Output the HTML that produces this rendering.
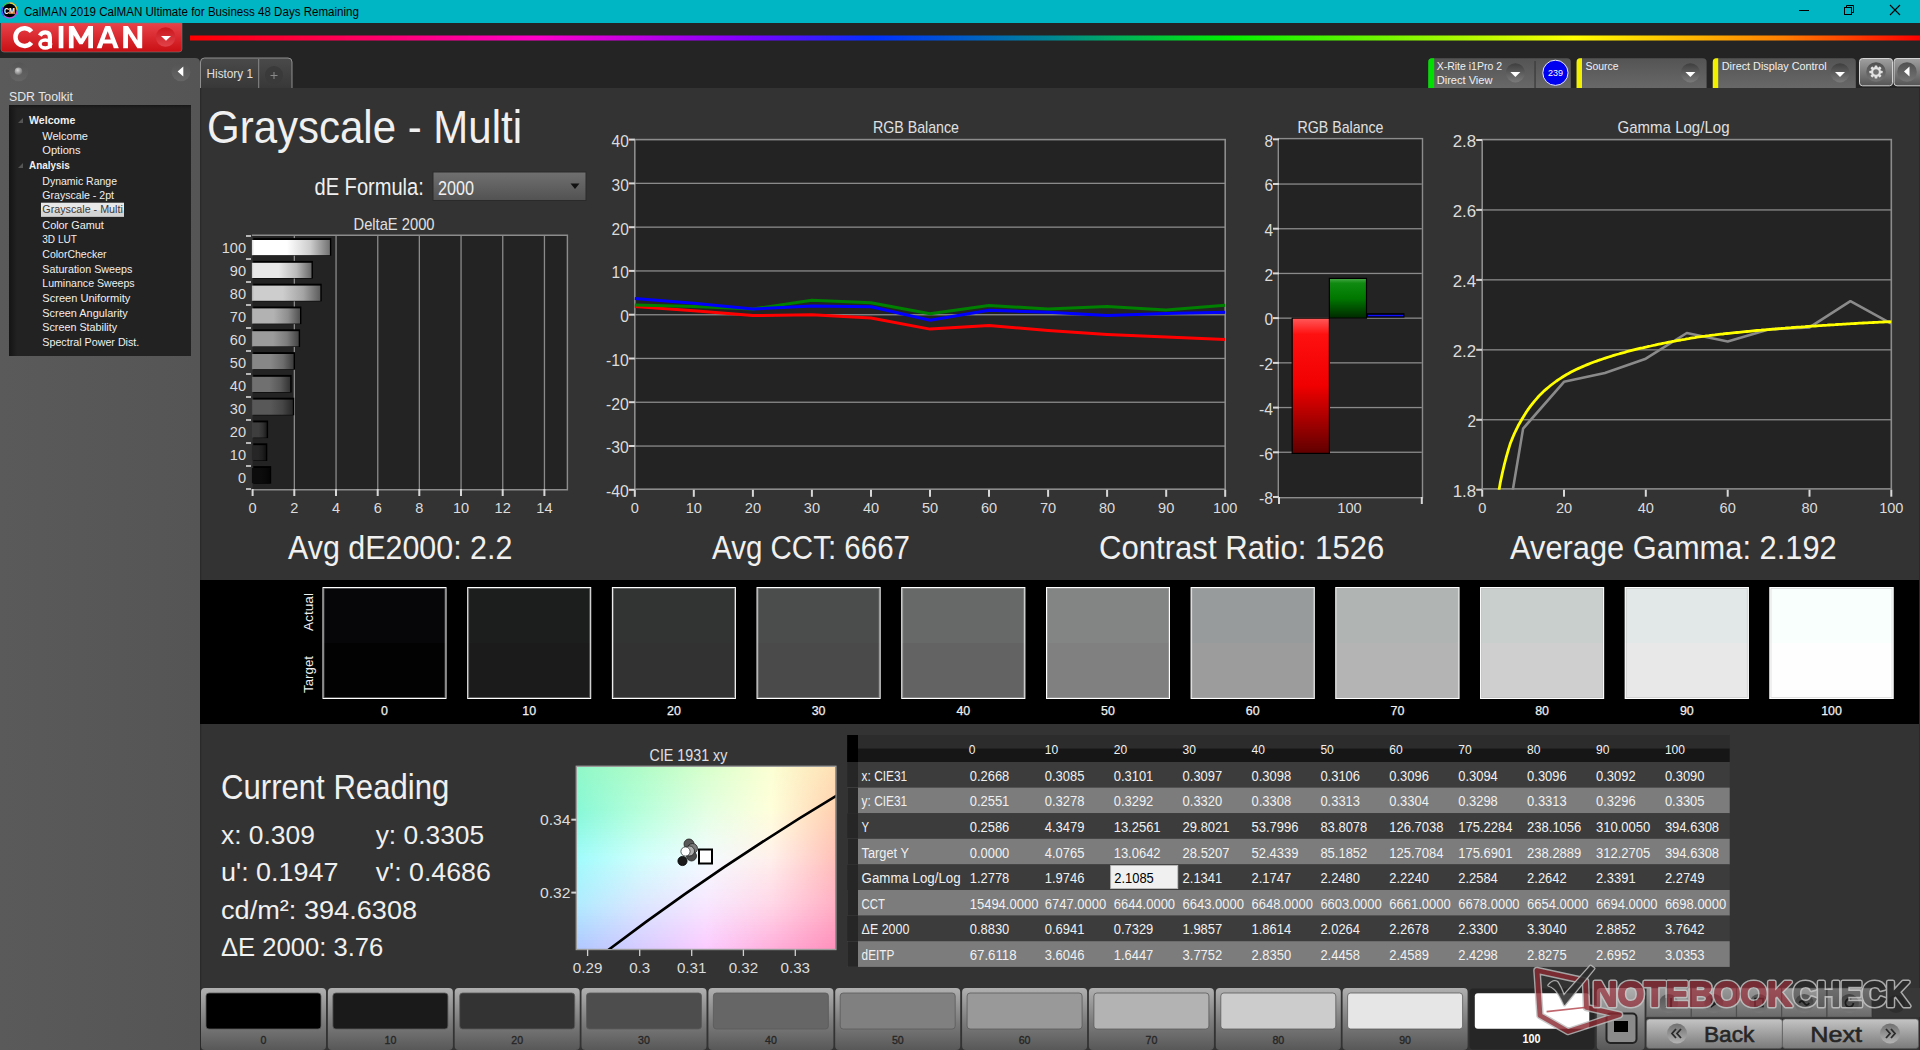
<!DOCTYPE html>
<html><head><meta charset="utf-8"><title>CalMAN</title>
<style>html,body{margin:0;padding:0;width:1920px;height:1050px;overflow:hidden;background:#333;}
svg text{font-family:"Liberation Sans",sans-serif;}</style></head>
<body>
<svg width="1920" height="1050" viewBox="0 0 1920 1050" style="position:absolute;left:0;top:0">
<defs>
<linearGradient id="rainbow" x1="190" x2="1920" y1="0" y2="0" gradientUnits="userSpaceOnUse">
<stop offset="0" stop-color="#ff0000"/><stop offset="0.2" stop-color="#ff00c8"/><stop offset="0.32" stop-color="#8000ff"/>
<stop offset="0.395" stop-color="#0030ff"/><stop offset="0.50" stop-color="#008890"/><stop offset="0.545" stop-color="#00b850"/><stop offset="0.60" stop-color="#00f000"/>
<stop offset="0.80" stop-color="#ffff00"/><stop offset="0.92" stop-color="#ff8000"/><stop offset="1" stop-color="#ff0000"/>
</linearGradient>
<linearGradient id="redbtn" x1="0" x2="0" y1="0" y2="1">
<stop offset="0" stop-color="#e8434a"/><stop offset="1" stop-color="#c90f14"/></linearGradient>
<linearGradient id="redcirc" x1="0" x2="0" y1="0" y2="1">
<stop offset="0" stop-color="#c8161c"/><stop offset="1" stop-color="#e2434a"/></linearGradient>
<linearGradient id="circ" x1="0" x2="0" y1="0" y2="1">
<stop offset="0" stop-color="#3e3e3e"/><stop offset="1" stop-color="#7a7a7a"/></linearGradient>
<linearGradient id="circ3" x1="0" x2="0" y1="0" y2="1">
<stop offset="0" stop-color="#707070"/><stop offset="1" stop-color="#b4b4b4"/></linearGradient>
<linearGradient id="circ2" x1="0" x2="0" y1="0" y2="1">
<stop offset="0" stop-color="#525252"/><stop offset="1" stop-color="#6c6c6c"/></linearGradient>
<linearGradient id="box" x1="0" x2="0" y1="0" y2="1">
<stop offset="0" stop-color="#545454"/><stop offset="1" stop-color="#686868"/></linearGradient>
<linearGradient id="gearbtn" x1="0" x2="0" y1="0" y2="1">
<stop offset="0" stop-color="#a0a0a0"/><stop offset="1" stop-color="#555555"/></linearGradient>
<linearGradient id="tab" x1="0" x2="0" y1="0" y2="1">
<stop offset="0" stop-color="#4a4a4a"/><stop offset="1" stop-color="#383838"/></linearGradient>
<linearGradient id="dd" x1="0" x2="0" y1="0" y2="1">
<stop offset="0" stop-color="#707070"/><stop offset="1" stop-color="#525252"/></linearGradient>
<linearGradient id="treeshadow" x1="0" x2="1" y1="0" y2="0">
<stop offset="0" stop-color="#141414"/><stop offset="1" stop-color="#222222"/></linearGradient>
<linearGradient id="treeshadowtop" x1="0" x2="0" y1="0" y2="1">
<stop offset="0" stop-color="#161616"/><stop offset="1" stop-color="#222222" stop-opacity="0"/></linearGradient>
<linearGradient id="sidebar" x1="0" x2="1" y1="0" y2="0">
<stop offset="0" stop-color="#5a5a5a"/><stop offset="1" stop-color="#555555"/></linearGradient>
<linearGradient id="btn" x1="0" x2="0" y1="0" y2="1">
<stop offset="0" stop-color="#b0b0b0"/><stop offset="0.55" stop-color="#7c7c7c"/><stop offset="1" stop-color="#585858"/></linearGradient>
<linearGradient id="btnsel" x1="0" x2="0" y1="0" y2="1">
<stop offset="0" stop-color="#1c1c1c"/><stop offset="1" stop-color="#303030"/></linearGradient>
<linearGradient id="nav" x1="0" x2="0" y1="0" y2="1">
<stop offset="0" stop-color="#c4c4c4"/><stop offset="1" stop-color="#7a7a7a"/></linearGradient>
<linearGradient id="navtop" x1="0" x2="0" y1="0" y2="1">
<stop offset="0" stop-color="#9a9a9a"/><stop offset="1" stop-color="#6a6a6a"/></linearGradient>
<linearGradient id="hdr" x1="0" x2="0" y1="0" y2="1">
<stop offset="0" stop-color="#2a2a2a"/><stop offset="0.45" stop-color="#1a1a1a"/><stop offset="1" stop-color="#0a0a0a"/></linearGradient>
<linearGradient id="redbar" x1="0" x2="0" y1="0" y2="1">
<stop offset="0" stop-color="#ff5a5a"/><stop offset="0.12" stop-color="#ff1010"/><stop offset="0.5" stop-color="#f00000"/><stop offset="1" stop-color="#600000"/></linearGradient>
<linearGradient id="greenbar" x1="0" x2="0" y1="0" y2="1">
<stop offset="0" stop-color="#48a848"/><stop offset="0.12" stop-color="#108a10"/><stop offset="0.5" stop-color="#007800"/><stop offset="1" stop-color="#002800"/></linearGradient>
<linearGradient id="bluebar" x1="0" x2="0" y1="0" y2="1">
<stop offset="0" stop-color="#3030ff"/><stop offset="1" stop-color="#000080"/></linearGradient>
<radialGradient id="ball" cx="0.4" cy="0.35" r="0.7">
<stop offset="0" stop-color="#d8d8d8"/><stop offset="1" stop-color="#6a6a6a"/></radialGradient>
<radialGradient id="cmring" cx="0.5" cy="0.5" r="0.5">
<stop offset="0.72" stop-color="#000"/><stop offset="1" stop-color="#000"/></radialGradient>
<linearGradient id="cieH" x1="0" x2="1" y1="0" y2="0">
<stop offset="0" stop-color="#9af0d0"/><stop offset="0.45" stop-color="#e8fff0"/><stop offset="1" stop-color="#ffd8a8"/></linearGradient>
<linearGradient id="cieB" x1="0" x2="1" y1="0" y2="0">
<stop offset="0" stop-color="#a8c4ff"/><stop offset="0.5" stop-color="#f8d8ff"/><stop offset="1" stop-color="#ff8cb4"/></linearGradient>
<linearGradient id="cieV" x1="0" x2="0" y1="0" y2="1">
<stop offset="0" stop-color="#fff" stop-opacity="0"/><stop offset="1" stop-color="#fff" stop-opacity="1"/></linearGradient>
<radialGradient id="cieW" cx="0.38" cy="0.45" r="0.45">
<stop offset="0" stop-color="#ffffff" stop-opacity="1"/><stop offset="1" stop-color="#ffffff" stop-opacity="0"/></radialGradient>

<linearGradient id="db100" x1="0" x2="1" y1="0" y2="0"><stop offset="0" stop-color="rgb(216,216,216)"/><stop offset="0.03" stop-color="rgb(255,255,255)"/><stop offset="0.45" stop-color="rgb(255,255,255)"/><stop offset="0.75" stop-color="rgb(204,204,204)"/><stop offset="1" stop-color="rgb(114,114,114)"/></linearGradient>
<linearGradient id="db90" x1="0" x2="1" y1="0" y2="0"><stop offset="0" stop-color="rgb(197,197,197)"/><stop offset="0.03" stop-color="rgb(232,232,232)"/><stop offset="0.45" stop-color="rgb(232,232,232)"/><stop offset="0.75" stop-color="rgb(185,185,185)"/><stop offset="1" stop-color="rgb(104,104,104)"/></linearGradient>
<linearGradient id="db80" x1="0" x2="1" y1="0" y2="0"><stop offset="0" stop-color="rgb(174,174,174)"/><stop offset="0.03" stop-color="rgb(205,205,205)"/><stop offset="0.45" stop-color="rgb(205,205,205)"/><stop offset="0.75" stop-color="rgb(164,164,164)"/><stop offset="1" stop-color="rgb(92,92,92)"/></linearGradient>
<linearGradient id="db70" x1="0" x2="1" y1="0" y2="0"><stop offset="0" stop-color="rgb(151,151,151)"/><stop offset="0.03" stop-color="rgb(178,178,178)"/><stop offset="0.45" stop-color="rgb(178,178,178)"/><stop offset="0.75" stop-color="rgb(142,142,142)"/><stop offset="1" stop-color="rgb(80,80,80)"/></linearGradient>
<linearGradient id="db60" x1="0" x2="1" y1="0" y2="0"><stop offset="0" stop-color="rgb(131,131,131)"/><stop offset="0.03" stop-color="rgb(155,155,155)"/><stop offset="0.45" stop-color="rgb(155,155,155)"/><stop offset="0.75" stop-color="rgb(124,124,124)"/><stop offset="1" stop-color="rgb(69,69,69)"/></linearGradient>
<linearGradient id="db50" x1="0" x2="1" y1="0" y2="0"><stop offset="0" stop-color="rgb(114,114,114)"/><stop offset="0.03" stop-color="rgb(135,135,135)"/><stop offset="0.45" stop-color="rgb(135,135,135)"/><stop offset="0.75" stop-color="rgb(108,108,108)"/><stop offset="1" stop-color="rgb(60,60,60)"/></linearGradient>
<linearGradient id="db40" x1="0" x2="1" y1="0" y2="0"><stop offset="0" stop-color="rgb(95,95,95)"/><stop offset="0.03" stop-color="rgb(112,112,112)"/><stop offset="0.45" stop-color="rgb(112,112,112)"/><stop offset="0.75" stop-color="rgb(89,89,89)"/><stop offset="1" stop-color="rgb(50,50,50)"/></linearGradient>
<linearGradient id="db30" x1="0" x2="1" y1="0" y2="0"><stop offset="0" stop-color="rgb(74,74,74)"/><stop offset="0.03" stop-color="rgb(88,88,88)"/><stop offset="0.45" stop-color="rgb(88,88,88)"/><stop offset="0.75" stop-color="rgb(70,70,70)"/><stop offset="1" stop-color="rgb(39,39,39)"/></linearGradient>
<linearGradient id="db20" x1="0" x2="1" y1="0" y2="0"><stop offset="0" stop-color="rgb(52,52,52)"/><stop offset="0.03" stop-color="rgb(62,62,62)"/><stop offset="0.45" stop-color="rgb(62,62,62)"/><stop offset="0.75" stop-color="rgb(49,49,49)"/><stop offset="1" stop-color="rgb(27,27,27)"/></linearGradient>
<linearGradient id="db10" x1="0" x2="1" y1="0" y2="0"><stop offset="0" stop-color="rgb(32,32,32)"/><stop offset="0.03" stop-color="rgb(38,38,38)"/><stop offset="0.45" stop-color="rgb(38,38,38)"/><stop offset="0.75" stop-color="rgb(30,30,30)"/><stop offset="1" stop-color="rgb(17,17,17)"/></linearGradient>
<linearGradient id="db0" x1="0" x2="1" y1="0" y2="0"><stop offset="0" stop-color="rgb(10,10,10)"/><stop offset="0.03" stop-color="rgb(12,12,12)"/><stop offset="0.45" stop-color="rgb(12,12,12)"/><stop offset="0.75" stop-color="rgb(9,9,9)"/><stop offset="1" stop-color="rgb(5,5,5)"/></linearGradient>
</defs>
<g font-family="Liberation Sans, sans-serif">
<rect x="0" y="0" width="1920" height="1050" fill="#333333"/>
<rect x="0" y="0" width="1920" height="23" fill="#00b5c4"/>
<circle cx="9.5" cy="10.5" r="7.6" fill="none" stroke="#e040e0" stroke-width="1.2"/>
<path d="M9.5 2.9 A7.6 7.6 0 0 1 17.1 10.5" fill="none" stroke="#e0e020" stroke-width="1.2"/>
<path d="M2.9 7 A7.6 7.6 0 0 1 9.5 2.9" fill="none" stroke="#20d040" stroke-width="1.2"/>
<path d="M4 16 A7.6 7.6 0 0 1 2.9 7" fill="none" stroke="#2060ff" stroke-width="1.2"/>
<circle cx="9.5" cy="10.5" r="6.8" fill="#000"/>
<text x="4.0" y="14.2" font-size="8.50" fill="#fff" textLength="11.0" lengthAdjust="spacingAndGlyphs" font-weight="bold" >CM</text>
<text x="24.0" y="15.6" font-size="12.50" fill="#000" textLength="335.0" lengthAdjust="spacingAndGlyphs" >CalMAN 2019 CalMAN Ultimate for Business 48 Days Remaining</text>
<rect x="1799" y="10" width="10" height="1" fill="#000"/>
<rect x="1844.5" y="7.5" width="7" height="7" fill="none" stroke="#000" stroke-width="1"/>
<path d="M1846.5 7.5 V5.5 H1853.5 V12.5 H1851.5" fill="none" stroke="#000" stroke-width="1"/>
<path d="M1890 5 L1900 15 M1900 5 L1890 15" stroke="#000" stroke-width="1.1"/>
<rect x="0" y="23" width="1920" height="65" fill="#242424"/>
<rect x="190" y="35.5" width="1730" height="5" fill="url(#rainbow)"/>
<path d="M1 23 H182 V49 Q182 52 179 52 H4 Q1 52 1 49 Z" fill="url(#redbtn)" stroke="#7a7a7a" stroke-width="0.6"/>
<g fill="#fff">
<path d="M31.45 31.59 A8.95 8.95 0 1 0 31.45 42.61" fill="none" stroke="#fff" stroke-width="4.5"/>
<path d="M39.8 35.6 Q41.6 32.4 45.4 32.4 Q49.9 32.4 49.9 37.6 V48.25" fill="none" stroke="#fff" stroke-width="4.2"/>
<ellipse cx="45.3" cy="44.1" rx="5.3" ry="4.0" fill="none" stroke="#fff" stroke-width="3.5"/>
<rect x="58.7" y="26" width="4.7" height="22.25"/>
<path d="M68.9 48.25 V26 H73.8 L81 38.8 L88.2 26 H93 V48.25 H88.3 V35 L82.6 44.3 H79.4 L73.6 35 V48.25 Z"/>
<path fill-rule="evenodd" d="M96.6 48.25 L105.3 26 H110.2 L118.8 48.25 H113.8 L112.2 43.4 H103.2 L101.6 48.25 Z M104.6 39.5 H110.8 L107.7 31.2 Z"/>
<path d="M123.2 48.25 V26 H128 L137.4 40.6 V26 H142.2 V48.25 H137.4 L128 33.6 V48.25 Z"/>
</g>
<circle cx="165.6" cy="37" r="9.8" fill="url(#redcirc)"/>
<path d="M161 36 H171 L166 40.8 Z" fill="#fff"/>
<path d="M0 58 H195 Q200 58 200 63 V1050 H0 Z" fill="url(#sidebar)"/>
<circle cx="18.75" cy="71.7" r="9.5" fill="url(#circ2)" opacity="0.6"/>
<circle cx="18.5" cy="71.3" r="3.8" fill="url(#ball)"/>
<circle cx="181" cy="71.7" r="9.5" fill="url(#circ2)" opacity="0.7"/>
<path d="M177.6 71.4 L183.3 66.5 V76.4 Z" fill="#fff"/>
<text x="9.0" y="100.8" font-size="13.08" fill="#e6e6e6" textLength="64.0" lengthAdjust="spacingAndGlyphs" >SDR Toolkit</text>
<rect x="9" y="105" width="182" height="251" fill="#222"/>
<rect x="9" y="105" width="8" height="251" fill="url(#treeshadow)"/>
<rect x="9" y="105" width="182" height="5" fill="url(#treeshadowtop)"/>
<text x="29.0" y="123.9" font-size="11.63" fill="#f0f0f0" textLength="46.3" lengthAdjust="spacingAndGlyphs" font-weight="bold" >Welcome</text>
<path d="M18 122.9 L23 122.9 L23 117.9 Z" fill="#555"/>
<text x="42.3" y="139.9" font-size="11.63" fill="#f0f0f0" textLength="45.7" lengthAdjust="spacingAndGlyphs" >Welcome</text>
<text x="42.3" y="153.7" font-size="11.63" fill="#f0f0f0" textLength="38.3" lengthAdjust="spacingAndGlyphs" >Options</text>
<text x="29.0" y="168.9" font-size="11.63" fill="#f0f0f0" textLength="40.7" lengthAdjust="spacingAndGlyphs" font-weight="bold" >Analysis</text>
<path d="M18 167.9 L23 167.9 L23 162.9 Z" fill="#555"/>
<text x="42.3" y="184.9" font-size="11.63" fill="#f0f0f0" textLength="74.7" lengthAdjust="spacingAndGlyphs" >Dynamic Range</text>
<text x="42.3" y="198.6" font-size="11.63" fill="#f0f0f0" textLength="71.7" lengthAdjust="spacingAndGlyphs" >Grayscale - 2pt</text>
<rect x="41" y="202.7" width="83" height="13.9" fill="#e8e8e8"/>
<rect x="41" y="210.4" width="83" height="6.2" fill="#d4d4d4"/>
<text x="42.3" y="213.4" font-size="11.63" fill="#3a3a3a" textLength="80.5" lengthAdjust="spacingAndGlyphs" >Grayscale - Multi</text>
<text x="42.3" y="228.6" font-size="11.63" fill="#f0f0f0" textLength="61.5" lengthAdjust="spacingAndGlyphs" >Color Gamut</text>
<text x="42.3" y="242.9" font-size="11.63" fill="#f0f0f0" textLength="34.5" lengthAdjust="spacingAndGlyphs" >3D LUT</text>
<text x="42.3" y="257.7" font-size="11.63" fill="#f0f0f0" textLength="64.2" lengthAdjust="spacingAndGlyphs" >ColorChecker</text>
<text x="42.3" y="272.8" font-size="11.63" fill="#f0f0f0" textLength="90.0" lengthAdjust="spacingAndGlyphs" >Saturation Sweeps</text>
<text x="42.3" y="287.0" font-size="11.63" fill="#f0f0f0" textLength="92.3" lengthAdjust="spacingAndGlyphs" >Luminance Sweeps</text>
<text x="42.3" y="301.9" font-size="11.63" fill="#f0f0f0" textLength="88.0" lengthAdjust="spacingAndGlyphs" >Screen Uniformity</text>
<text x="42.3" y="316.8" font-size="11.63" fill="#f0f0f0" textLength="85.5" lengthAdjust="spacingAndGlyphs" >Screen Angularity</text>
<text x="42.3" y="331.0" font-size="11.63" fill="#f0f0f0" textLength="74.8" lengthAdjust="spacingAndGlyphs" >Screen Stability</text>
<text x="42.3" y="345.8" font-size="11.63" fill="#f0f0f0" textLength="97.0" lengthAdjust="spacingAndGlyphs" >Spectral Power Dist.</text>
<path d="M200.5 88 V62 Q200.5 58 204.5 58 H288 Q292 58 292 62 V88" fill="url(#tab)" stroke="#9a9a9a" stroke-width="0.9"/>
<rect x="258.2" y="59" width="1" height="29" fill="#8a8a8a"/>
<text x="206.5" y="78.0" font-size="11.92" fill="#e0e0e0" textLength="46.5" lengthAdjust="spacingAndGlyphs" >History 1</text>
<circle cx="274" cy="75" r="9" fill="#3a3a3a"/>
<path d="M270.5 75.5 H277.5 M274 72 V79" stroke="#8a8a8a" stroke-width="1"/>
<rect x="200" y="88" width="1719" height="962" fill="#333333"/>
<rect x="1919" y="88" width="1" height="962" fill="#2a2a2a"/>
<rect x="200" y="88" width="1.2" height="962" fill="#2a2a2a"/>
<path d="M1428.3 88 V62 Q1428.3 58.3 1432 58.3 H1567 Q1570.8 58.3 1570.8 62 V88 Z" fill="url(#box)"/>
<path d="M1428.3 88 V62 Q1428.3 58.3 1432 58.3 H1434.2 V88 Z" fill="#00e000"/>
<text x="1436.7" y="69.9" font-size="11.05" fill="#f0f0f0" textLength="65.3" lengthAdjust="spacingAndGlyphs" >X-Rite i1Pro 2</text>
<text x="1436.7" y="83.7" font-size="11.05" fill="#f0f0f0" textLength="55.8" lengthAdjust="spacingAndGlyphs" >Direct View</text>
<circle cx="1515.4" cy="72.8" r="9.6" fill="url(#circ)"/>
<path d="M1510.4 72.0 H1520.4 L1515.4 77.0 Z" fill="#fff"/>
<rect x="1534.3" y="61" width="1.5" height="27" fill="#404040"/>
<circle cx="1555.4" cy="72.8" r="12.6" fill="#0000f0" stroke="#e8e8ff" stroke-width="1"/>
<text x="1547.9" y="75.8" font-size="8.72" fill="#fff" textLength="15.0" lengthAdjust="spacingAndGlyphs" >239</text>
<path d="M1576.6 88 V62 Q1576.6 58.3 1580.3 58.3 H1702.8 Q1706.6 58.3 1706.6 62 V88 Z" fill="url(#box)"/>
<path d="M1576.6 88 V62 Q1576.6 58.3 1580.3 58.3 H1582.0 V88 Z" fill="#f0f000"/>
<text x="1585.6" y="69.9" font-size="11.05" fill="#f0f0f0" textLength="33.0" lengthAdjust="spacingAndGlyphs" >Source</text>
<circle cx="1690.4" cy="72.8" r="9.6" fill="url(#circ)"/>
<path d="M1685.4 72.0 H1695.4 L1690.4 77.0 Z" fill="#fff"/>
<path d="M1712.8 88 V62 Q1712.8 58.3 1716.5 58.3 H1852.0 Q1855.8 58.3 1855.8 62 V88 Z" fill="url(#box)"/>
<path d="M1712.8 88 V62 Q1712.8 58.3 1716.5 58.3 H1718.2 V88 Z" fill="#f0f000"/>
<text x="1721.8" y="69.9" font-size="11.05" fill="#f0f0f0" textLength="104.8" lengthAdjust="spacingAndGlyphs" >Direct Display Control</text>
<circle cx="1840" cy="72.8" r="9.6" fill="url(#circ)"/>
<path d="M1835 72.0 H1845 L1840 77.0 Z" fill="#fff"/>
<rect x="1859.5" y="58.5" width="33" height="27.3" rx="3" fill="url(#gearbtn)" stroke="#e0e0e0" stroke-width="0.9"/>
<circle cx="1876" cy="72" r="9.8" fill="url(#circ)" opacity="0.8"/>
<g transform="translate(1876,72)" fill="#e2e2e2"><circle r="4.9"/><rect x="-1.35" y="-6.6" width="2.7" height="3" rx="0.6" transform="rotate(0)"/><rect x="-1.35" y="-6.6" width="2.7" height="3" rx="0.6" transform="rotate(45)"/><rect x="-1.35" y="-6.6" width="2.7" height="3" rx="0.6" transform="rotate(90)"/><rect x="-1.35" y="-6.6" width="2.7" height="3" rx="0.6" transform="rotate(135)"/><rect x="-1.35" y="-6.6" width="2.7" height="3" rx="0.6" transform="rotate(180)"/><rect x="-1.35" y="-6.6" width="2.7" height="3" rx="0.6" transform="rotate(225)"/><rect x="-1.35" y="-6.6" width="2.7" height="3" rx="0.6" transform="rotate(270)"/><rect x="-1.35" y="-6.6" width="2.7" height="3" rx="0.6" transform="rotate(315)"/></g>
<circle cx="1876" cy="72" r="2.8" fill="#727272"/>
<rect x="1894" y="58.5" width="30" height="27.3" rx="3" fill="url(#gearbtn)" stroke="#e0e0e0" stroke-width="0.9"/>
<circle cx="1907" cy="72" r="9.8" fill="url(#circ)" opacity="0.8"/>
<path d="M1904 71.5 L1909.5 66.5 V76.5 Z" fill="#fff"/>
<text x="207.0" y="143.2" font-size="45.49" fill="#f0f0f0" textLength="315.0" lengthAdjust="spacingAndGlyphs" >Grayscale - Multi</text>
<text x="314.5" y="195.0" font-size="23.69" fill="#f0f0f0" textLength="109.3" lengthAdjust="spacingAndGlyphs" >dE Formula:</text>
<rect x="433" y="172" width="153" height="28.5" fill="url(#dd)" stroke="#2a2a2a" stroke-width="1"/>
<text x="438.0" y="195.0" font-size="20.06" fill="#f0f0f0" textLength="36.0" lengthAdjust="spacingAndGlyphs" >2000</text>
<path d="M570.5 183.5 H579.5 L575 189 Z" fill="#111"/>
<text x="353.5" y="230.2" font-size="15.70" fill="#e0e0e0" textLength="81.0" lengthAdjust="spacingAndGlyphs" >DeltaE 2000</text>
<rect x="252.6" y="236.0" width="314.1" height="253.0" fill="#232323"/>
<rect x="293.7" y="236.0" width="1.3" height="253.0" fill="#8a8a8a"/>
<rect x="335.4" y="236.0" width="1.3" height="253.0" fill="#8a8a8a"/>
<rect x="377.1" y="236.0" width="1.3" height="253.0" fill="#8a8a8a"/>
<rect x="418.7" y="236.0" width="1.3" height="253.0" fill="#8a8a8a"/>
<rect x="460.4" y="236.0" width="1.3" height="253.0" fill="#8a8a8a"/>
<rect x="502.1" y="236.0" width="1.3" height="253.0" fill="#8a8a8a"/>
<rect x="543.8" y="236.0" width="1.3" height="253.0" fill="#8a8a8a"/>
<path d="M251.9 235.3 H567.4000000000001 V489.7 H251.9" fill="none" stroke="#8c8c8c" stroke-width="1.4"/>
<rect x="253.3" y="238.1" width="78.0" height="17.6" fill="#000"/>
<rect x="251.9" y="240.0" width="78.0" height="15.2" fill="url(#db100)"/>
<rect x="246" y="235.2" width="5" height="1.6" fill="#d8d8d8"/>
<text x="246.0" y="253.3" font-size="14.53" fill="#dcdcdc" textLength="24.3" lengthAdjust="spacingAndGlyphs" text-anchor="end" >100</text>
<rect x="253.3" y="260.9" width="59.6" height="17.6" fill="#000"/>
<rect x="251.9" y="262.8" width="59.6" height="15.2" fill="url(#db90)"/>
<rect x="246" y="258.2" width="5" height="1.6" fill="#d8d8d8"/>
<text x="246.0" y="276.3" font-size="14.53" fill="#dcdcdc" textLength="16.2" lengthAdjust="spacingAndGlyphs" text-anchor="end" >90</text>
<rect x="253.3" y="283.7" width="68.4" height="17.6" fill="#000"/>
<rect x="251.9" y="285.6" width="68.4" height="15.2" fill="url(#db80)"/>
<rect x="246" y="281.2" width="5" height="1.6" fill="#d8d8d8"/>
<text x="246.0" y="299.3" font-size="14.53" fill="#dcdcdc" textLength="16.2" lengthAdjust="spacingAndGlyphs" text-anchor="end" >80</text>
<rect x="253.3" y="306.5" width="48.1" height="17.6" fill="#000"/>
<rect x="251.9" y="308.4" width="48.1" height="15.2" fill="url(#db70)"/>
<rect x="246" y="304.2" width="5" height="1.6" fill="#d8d8d8"/>
<text x="246.0" y="322.3" font-size="14.53" fill="#dcdcdc" textLength="16.2" lengthAdjust="spacingAndGlyphs" text-anchor="end" >70</text>
<rect x="253.3" y="329.3" width="46.8" height="17.6" fill="#000"/>
<rect x="251.9" y="331.2" width="46.8" height="15.2" fill="url(#db60)"/>
<rect x="246" y="327.2" width="5" height="1.6" fill="#d8d8d8"/>
<text x="246.0" y="345.3" font-size="14.53" fill="#dcdcdc" textLength="16.2" lengthAdjust="spacingAndGlyphs" text-anchor="end" >60</text>
<rect x="253.3" y="352.1" width="41.7" height="17.6" fill="#000"/>
<rect x="251.9" y="354.0" width="41.7" height="15.2" fill="url(#db50)"/>
<rect x="246" y="350.2" width="5" height="1.6" fill="#d8d8d8"/>
<text x="246.0" y="368.3" font-size="14.53" fill="#dcdcdc" textLength="16.2" lengthAdjust="spacingAndGlyphs" text-anchor="end" >50</text>
<rect x="253.3" y="374.9" width="38.3" height="17.6" fill="#000"/>
<rect x="251.9" y="376.8" width="38.3" height="15.2" fill="url(#db40)"/>
<rect x="246" y="373.2" width="5" height="1.6" fill="#d8d8d8"/>
<text x="246.0" y="391.3" font-size="14.53" fill="#dcdcdc" textLength="16.2" lengthAdjust="spacingAndGlyphs" text-anchor="end" >40</text>
<rect x="253.3" y="397.7" width="40.9" height="17.6" fill="#000"/>
<rect x="251.9" y="399.6" width="40.9" height="15.2" fill="url(#db30)"/>
<rect x="246" y="396.2" width="5" height="1.6" fill="#d8d8d8"/>
<text x="246.0" y="414.3" font-size="14.53" fill="#dcdcdc" textLength="16.2" lengthAdjust="spacingAndGlyphs" text-anchor="end" >30</text>
<rect x="253.3" y="420.5" width="14.8" height="17.6" fill="#000"/>
<rect x="251.9" y="422.4" width="14.8" height="15.2" fill="url(#db20)"/>
<rect x="246" y="419.2" width="5" height="1.6" fill="#d8d8d8"/>
<text x="246.0" y="437.3" font-size="14.53" fill="#dcdcdc" textLength="16.2" lengthAdjust="spacingAndGlyphs" text-anchor="end" >20</text>
<rect x="253.3" y="443.3" width="14.0" height="17.6" fill="#000"/>
<rect x="251.9" y="445.2" width="14.0" height="15.2" fill="url(#db10)"/>
<rect x="246" y="442.2" width="5" height="1.6" fill="#d8d8d8"/>
<text x="246.0" y="460.3" font-size="14.53" fill="#dcdcdc" textLength="16.2" lengthAdjust="spacingAndGlyphs" text-anchor="end" >10</text>
<rect x="253.3" y="466.1" width="17.9" height="17.6" fill="#000"/>
<rect x="251.9" y="468.0" width="17.9" height="15.2" fill="url(#db0)"/>
<rect x="246" y="465.2" width="5" height="1.6" fill="#d8d8d8"/>
<text x="246.0" y="483.3" font-size="14.53" fill="#dcdcdc" textLength="8.1" lengthAdjust="spacingAndGlyphs" text-anchor="end" >0</text>
<rect x="246" y="488.2" width="5" height="1.6" fill="#d8d8d8"/>
<rect x="251.6" y="489.0" width="2" height="7" fill="#d8d8d8"/>
<text x="252.6" y="512.5" font-size="15.41" fill="#dcdcdc" textLength="8.1" lengthAdjust="spacingAndGlyphs" text-anchor="middle" >0</text>
<rect x="293.3" y="489.0" width="2" height="7" fill="#d8d8d8"/>
<text x="294.3" y="512.5" font-size="15.41" fill="#dcdcdc" textLength="8.1" lengthAdjust="spacingAndGlyphs" text-anchor="middle" >2</text>
<rect x="335.0" y="489.0" width="2" height="7" fill="#d8d8d8"/>
<text x="336.0" y="512.5" font-size="15.41" fill="#dcdcdc" textLength="8.1" lengthAdjust="spacingAndGlyphs" text-anchor="middle" >4</text>
<rect x="376.7" y="489.0" width="2" height="7" fill="#d8d8d8"/>
<text x="377.7" y="512.5" font-size="15.41" fill="#dcdcdc" textLength="8.1" lengthAdjust="spacingAndGlyphs" text-anchor="middle" >6</text>
<rect x="418.3" y="489.0" width="2" height="7" fill="#d8d8d8"/>
<text x="419.3" y="512.5" font-size="15.41" fill="#dcdcdc" textLength="8.1" lengthAdjust="spacingAndGlyphs" text-anchor="middle" >8</text>
<rect x="460.0" y="489.0" width="2" height="7" fill="#d8d8d8"/>
<text x="461.0" y="512.5" font-size="15.41" fill="#dcdcdc" textLength="16.2" lengthAdjust="spacingAndGlyphs" text-anchor="middle" >10</text>
<rect x="501.7" y="489.0" width="2" height="7" fill="#d8d8d8"/>
<text x="502.7" y="512.5" font-size="15.41" fill="#dcdcdc" textLength="16.2" lengthAdjust="spacingAndGlyphs" text-anchor="middle" >12</text>
<rect x="543.4" y="489.0" width="2" height="7" fill="#d8d8d8"/>
<text x="544.4" y="512.5" font-size="15.41" fill="#dcdcdc" textLength="16.2" lengthAdjust="spacingAndGlyphs" text-anchor="middle" >14</text>
<text x="288.0" y="558.9" font-size="33.43" fill="#f0f0f0" textLength="224.3" lengthAdjust="spacingAndGlyphs" >Avg dE2000: 2.2</text>
<text x="873.0" y="132.5" font-size="15.70" fill="#e0e0e0" textLength="86.0" lengthAdjust="spacingAndGlyphs" >RGB Balance</text>
<rect x="634.8" y="139.6" width="590.4000000000001" height="350.20000000000005" fill="#232323"/>
<rect x="634.8" y="445.4" width="590.4000000000001" height="1.3" fill="#8a8a8a"/>
<rect x="634.8" y="401.6" width="590.4000000000001" height="1.3" fill="#8a8a8a"/>
<rect x="634.8" y="357.8" width="590.4000000000001" height="1.3" fill="#8a8a8a"/>
<rect x="634.8" y="314.1" width="590.4000000000001" height="1.3" fill="#8a8a8a"/>
<rect x="634.8" y="270.3" width="590.4000000000001" height="1.3" fill="#8a8a8a"/>
<rect x="634.8" y="226.5" width="590.4000000000001" height="1.3" fill="#8a8a8a"/>
<rect x="634.8" y="182.7" width="590.4000000000001" height="1.3" fill="#8a8a8a"/>
<rect x="634.8" y="139.6" width="590.4000000000001" height="349.6" fill="none" stroke="#8c8c8c" stroke-width="1.6"/>
<rect x="628.8" y="488.8" width="6" height="2" fill="#d8d8d8"/>
<text x="628.8" y="497.1" font-size="15.99" fill="#dcdcdc" textLength="22.8" lengthAdjust="spacingAndGlyphs" text-anchor="end" >-40</text>
<rect x="628.8" y="445.0" width="6" height="2" fill="#d8d8d8"/>
<text x="628.8" y="453.3" font-size="15.99" fill="#dcdcdc" textLength="22.8" lengthAdjust="spacingAndGlyphs" text-anchor="end" >-30</text>
<rect x="628.8" y="401.2" width="6" height="2" fill="#d8d8d8"/>
<text x="628.8" y="409.6" font-size="15.99" fill="#dcdcdc" textLength="22.8" lengthAdjust="spacingAndGlyphs" text-anchor="end" >-20</text>
<rect x="628.8" y="357.5" width="6" height="2" fill="#d8d8d8"/>
<text x="628.8" y="365.8" font-size="15.99" fill="#dcdcdc" textLength="22.8" lengthAdjust="spacingAndGlyphs" text-anchor="end" >-10</text>
<rect x="628.8" y="313.7" width="6" height="2" fill="#d8d8d8"/>
<text x="628.8" y="322.0" font-size="15.99" fill="#dcdcdc" textLength="8.6" lengthAdjust="spacingAndGlyphs" text-anchor="end" >0</text>
<rect x="628.8" y="269.9" width="6" height="2" fill="#d8d8d8"/>
<text x="628.8" y="278.2" font-size="15.99" fill="#dcdcdc" textLength="17.2" lengthAdjust="spacingAndGlyphs" text-anchor="end" >10</text>
<rect x="628.8" y="226.2" width="6" height="2" fill="#d8d8d8"/>
<text x="628.8" y="234.5" font-size="15.99" fill="#dcdcdc" textLength="17.2" lengthAdjust="spacingAndGlyphs" text-anchor="end" >20</text>
<rect x="628.8" y="182.4" width="6" height="2" fill="#d8d8d8"/>
<text x="628.8" y="190.7" font-size="15.99" fill="#dcdcdc" textLength="17.2" lengthAdjust="spacingAndGlyphs" text-anchor="end" >30</text>
<rect x="628.8" y="138.6" width="6" height="2" fill="#d8d8d8"/>
<text x="628.8" y="146.9" font-size="15.99" fill="#dcdcdc" textLength="17.2" lengthAdjust="spacingAndGlyphs" text-anchor="end" >40</text>
<rect x="633.8" y="489.8" width="2" height="7" fill="#d8d8d8"/>
<text x="634.8" y="512.5" font-size="15.41" fill="#dcdcdc" textLength="8.1" lengthAdjust="spacingAndGlyphs" text-anchor="middle" >0</text>
<rect x="692.8" y="489.8" width="2" height="7" fill="#d8d8d8"/>
<text x="693.8" y="512.5" font-size="15.41" fill="#dcdcdc" textLength="16.2" lengthAdjust="spacingAndGlyphs" text-anchor="middle" >10</text>
<rect x="751.9" y="489.8" width="2" height="7" fill="#d8d8d8"/>
<text x="752.9" y="512.5" font-size="15.41" fill="#dcdcdc" textLength="16.2" lengthAdjust="spacingAndGlyphs" text-anchor="middle" >20</text>
<rect x="810.9" y="489.8" width="2" height="7" fill="#d8d8d8"/>
<text x="811.9" y="512.5" font-size="15.41" fill="#dcdcdc" textLength="16.2" lengthAdjust="spacingAndGlyphs" text-anchor="middle" >30</text>
<rect x="870.0" y="489.8" width="2" height="7" fill="#d8d8d8"/>
<text x="871.0" y="512.5" font-size="15.41" fill="#dcdcdc" textLength="16.2" lengthAdjust="spacingAndGlyphs" text-anchor="middle" >40</text>
<rect x="929.0" y="489.8" width="2" height="7" fill="#d8d8d8"/>
<text x="930.0" y="512.5" font-size="15.41" fill="#dcdcdc" textLength="16.2" lengthAdjust="spacingAndGlyphs" text-anchor="middle" >50</text>
<rect x="988.0" y="489.8" width="2" height="7" fill="#d8d8d8"/>
<text x="989.0" y="512.5" font-size="15.41" fill="#dcdcdc" textLength="16.2" lengthAdjust="spacingAndGlyphs" text-anchor="middle" >60</text>
<rect x="1047.1" y="489.8" width="2" height="7" fill="#d8d8d8"/>
<text x="1048.1" y="512.5" font-size="15.41" fill="#dcdcdc" textLength="16.2" lengthAdjust="spacingAndGlyphs" text-anchor="middle" >70</text>
<rect x="1106.1" y="489.8" width="2" height="7" fill="#d8d8d8"/>
<text x="1107.1" y="512.5" font-size="15.41" fill="#dcdcdc" textLength="16.2" lengthAdjust="spacingAndGlyphs" text-anchor="middle" >80</text>
<rect x="1165.2" y="489.8" width="2" height="7" fill="#d8d8d8"/>
<text x="1166.2" y="512.5" font-size="15.41" fill="#dcdcdc" textLength="16.2" lengthAdjust="spacingAndGlyphs" text-anchor="middle" >90</text>
<rect x="1224.2" y="489.8" width="2" height="7" fill="#d8d8d8"/>
<text x="1225.2" y="512.5" font-size="15.41" fill="#dcdcdc" textLength="24.3" lengthAdjust="spacingAndGlyphs" text-anchor="middle" >100</text>
<polyline points="634.8,306.4 693.8,310.8 752.9,315.6 811.9,314.7 871.0,318.0 930.0,329.1 989.0,325.4 1048.1,330.5 1107.1,334.4 1166.2,337.0 1225.2,339.4" fill="none" stroke="#ff0000" stroke-width="3" stroke-linejoin="round"/>
<polyline points="634.8,305.1 693.8,306.4 752.9,309.0 811.9,300.3 871.0,302.7 930.0,313.8 989.0,305.5 1048.1,309.0 1107.1,306.4 1166.2,310.1 1225.2,305.3" fill="none" stroke="#008000" stroke-width="3" stroke-linejoin="round"/>
<polyline points="634.8,298.5 693.8,303.3 752.9,309.0 811.9,305.9 871.0,306.8 930.0,320.2 989.0,310.3 1048.1,312.3 1107.1,315.6 1166.2,313.4 1225.2,312.3" fill="none" stroke="#0000ff" stroke-width="3" stroke-linejoin="round"/>
<text x="712.0" y="558.6" font-size="32.41" fill="#f0f0f0" textLength="198.0" lengthAdjust="spacingAndGlyphs" >Avg CCT: 6667</text>
<text x="1297.5" y="132.5" font-size="15.70" fill="#e0e0e0" textLength="86.0" lengthAdjust="spacingAndGlyphs" >RGB Balance</text>
<rect x="1279.0" y="139.3" width="142.79999999999995" height="357.7" fill="#232323"/>
<rect x="1279.0" y="451.6" width="142.79999999999995" height="1.3" fill="#8a8a8a"/>
<rect x="1279.0" y="406.9" width="142.79999999999995" height="1.3" fill="#8a8a8a"/>
<rect x="1279.0" y="362.2" width="142.79999999999995" height="1.3" fill="#8a8a8a"/>
<rect x="1279.0" y="317.5" width="142.79999999999995" height="1.3" fill="#8a8a8a"/>
<rect x="1279.0" y="272.8" width="142.79999999999995" height="1.3" fill="#8a8a8a"/>
<rect x="1279.0" y="228.1" width="142.79999999999995" height="1.3" fill="#8a8a8a"/>
<rect x="1279.0" y="183.4" width="142.79999999999995" height="1.3" fill="#8a8a8a"/>
<rect x="1278.3" y="138.60000000000002" width="144.19999999999996" height="359.09999999999997" fill="none" stroke="#8c8c8c" stroke-width="1.4"/>
<rect x="1273.0" y="496.0" width="6" height="2" fill="#d8d8d8"/>
<text x="1273.0" y="504.3" font-size="15.99" fill="#dcdcdc" textLength="14.0" lengthAdjust="spacingAndGlyphs" text-anchor="end" >-8</text>
<rect x="1273.0" y="451.3" width="6" height="2" fill="#d8d8d8"/>
<text x="1273.0" y="459.6" font-size="15.99" fill="#dcdcdc" textLength="14.0" lengthAdjust="spacingAndGlyphs" text-anchor="end" >-6</text>
<rect x="1273.0" y="406.6" width="6" height="2" fill="#d8d8d8"/>
<text x="1273.0" y="414.9" font-size="15.99" fill="#dcdcdc" textLength="14.0" lengthAdjust="spacingAndGlyphs" text-anchor="end" >-4</text>
<rect x="1273.0" y="361.9" width="6" height="2" fill="#d8d8d8"/>
<text x="1273.0" y="370.2" font-size="15.99" fill="#dcdcdc" textLength="14.0" lengthAdjust="spacingAndGlyphs" text-anchor="end" >-2</text>
<rect x="1273.0" y="317.1" width="6" height="2" fill="#d8d8d8"/>
<text x="1273.0" y="325.4" font-size="15.99" fill="#dcdcdc" textLength="8.6" lengthAdjust="spacingAndGlyphs" text-anchor="end" >0</text>
<rect x="1273.0" y="272.4" width="6" height="2" fill="#d8d8d8"/>
<text x="1273.0" y="280.7" font-size="15.99" fill="#dcdcdc" textLength="8.6" lengthAdjust="spacingAndGlyphs" text-anchor="end" >2</text>
<rect x="1273.0" y="227.7" width="6" height="2" fill="#d8d8d8"/>
<text x="1273.0" y="236.0" font-size="15.99" fill="#dcdcdc" textLength="8.6" lengthAdjust="spacingAndGlyphs" text-anchor="end" >4</text>
<rect x="1273.0" y="183.0" width="6" height="2" fill="#d8d8d8"/>
<text x="1273.0" y="191.3" font-size="15.99" fill="#dcdcdc" textLength="8.6" lengthAdjust="spacingAndGlyphs" text-anchor="end" >6</text>
<rect x="1273.0" y="138.3" width="6" height="2" fill="#d8d8d8"/>
<text x="1273.0" y="146.6" font-size="15.99" fill="#dcdcdc" textLength="8.6" lengthAdjust="spacingAndGlyphs" text-anchor="end" >8</text>
<rect x="1278.0" y="497.0" width="2" height="7" fill="#d8d8d8"/>
<rect x="1420.8" y="497.0" width="2" height="7" fill="#d8d8d8"/>
<text x="1349.5" y="512.5" font-size="15.41" fill="#dcdcdc" textLength="24.3" lengthAdjust="spacingAndGlyphs" text-anchor="middle" >100</text>
<rect x="1292.2" y="318.1" width="37.2" height="135.3" fill="url(#redbar)" stroke="#000" stroke-width="1.2"/>
<rect x="1329.4" y="278.4" width="37.1" height="39.8" fill="url(#greenbar)" stroke="#000" stroke-width="1.2"/>
<rect x="1366.5" y="313.2" width="38" height="4.4" fill="#000"/>
<rect x="1368" y="314.8" width="35" height="1.5" fill="#1010ff"/>
<text x="1099.0" y="558.6" font-size="32.41" fill="#f0f0f0" textLength="285.3" lengthAdjust="spacingAndGlyphs" >Contrast Ratio: 1526</text>
<text x="1617.5" y="132.5" font-size="15.70" fill="#e0e0e0" textLength="112.0" lengthAdjust="spacingAndGlyphs" >Gamma Log/Log</text>
<rect x="1482.2" y="140.0" width="409.0999999999999" height="349.7" fill="#232323"/>
<rect x="1482.2" y="419.1" width="409.0999999999999" height="1.3" fill="#8a8a8a"/>
<rect x="1482.2" y="349.2" width="409.0999999999999" height="1.3" fill="#8a8a8a"/>
<rect x="1482.2" y="279.2" width="409.0999999999999" height="1.3" fill="#8a8a8a"/>
<rect x="1482.2" y="209.3" width="409.0999999999999" height="1.3" fill="#8a8a8a"/>
<rect x="1482.2" y="139.6" width="409.0999999999999" height="349.3" fill="none" stroke="#8c8c8c" stroke-width="1.6"/>
<rect x="1476.2" y="488.7" width="6" height="2" fill="#d8d8d8"/>
<text x="1476.2" y="497.0" font-size="15.99" fill="#dcdcdc" textLength="23.5" lengthAdjust="spacingAndGlyphs" text-anchor="end" >1.8</text>
<rect x="1476.2" y="418.8" width="6" height="2" fill="#d8d8d8"/>
<text x="1476.2" y="427.1" font-size="15.99" fill="#dcdcdc" textLength="8.6" lengthAdjust="spacingAndGlyphs" text-anchor="end" >2</text>
<rect x="1476.2" y="348.8" width="6" height="2" fill="#d8d8d8"/>
<text x="1476.2" y="357.1" font-size="15.99" fill="#dcdcdc" textLength="23.5" lengthAdjust="spacingAndGlyphs" text-anchor="end" >2.2</text>
<rect x="1476.2" y="278.9" width="6" height="2" fill="#d8d8d8"/>
<text x="1476.2" y="287.2" font-size="15.99" fill="#dcdcdc" textLength="23.5" lengthAdjust="spacingAndGlyphs" text-anchor="end" >2.4</text>
<rect x="1476.2" y="208.9" width="6" height="2" fill="#d8d8d8"/>
<text x="1476.2" y="217.2" font-size="15.99" fill="#dcdcdc" textLength="23.5" lengthAdjust="spacingAndGlyphs" text-anchor="end" >2.6</text>
<rect x="1476.2" y="139.0" width="6" height="2" fill="#d8d8d8"/>
<text x="1476.2" y="147.3" font-size="15.99" fill="#dcdcdc" textLength="23.5" lengthAdjust="spacingAndGlyphs" text-anchor="end" >2.8</text>
<rect x="1481.2" y="489.7" width="2" height="7" fill="#d8d8d8"/>
<text x="1482.2" y="512.5" font-size="15.41" fill="#dcdcdc" textLength="8.1" lengthAdjust="spacingAndGlyphs" text-anchor="middle" >0</text>
<rect x="1563.0" y="489.7" width="2" height="7" fill="#d8d8d8"/>
<text x="1564.0" y="512.5" font-size="15.41" fill="#dcdcdc" textLength="16.2" lengthAdjust="spacingAndGlyphs" text-anchor="middle" >20</text>
<rect x="1644.8" y="489.7" width="2" height="7" fill="#d8d8d8"/>
<text x="1645.8" y="512.5" font-size="15.41" fill="#dcdcdc" textLength="16.2" lengthAdjust="spacingAndGlyphs" text-anchor="middle" >40</text>
<rect x="1726.7" y="489.7" width="2" height="7" fill="#d8d8d8"/>
<text x="1727.7" y="512.5" font-size="15.41" fill="#dcdcdc" textLength="16.2" lengthAdjust="spacingAndGlyphs" text-anchor="middle" >60</text>
<rect x="1808.5" y="489.7" width="2" height="7" fill="#d8d8d8"/>
<text x="1809.5" y="512.5" font-size="15.41" fill="#dcdcdc" textLength="16.2" lengthAdjust="spacingAndGlyphs" text-anchor="middle" >80</text>
<rect x="1890.3" y="489.7" width="2" height="7" fill="#d8d8d8"/>
<text x="1891.3" y="512.5" font-size="15.41" fill="#dcdcdc" textLength="24.3" lengthAdjust="spacingAndGlyphs" text-anchor="middle" >100</text>
<clipPath id="gclip"><rect x="1482.2" y="140.0" width="411.0999999999999" height="349.7"/></clipPath>
<polyline clip-path="url(#gclip)" points="1482.2,672.3 1523.1,428.6 1564.0,381.8 1604.9,372.9 1645.8,358.7 1686.8,333.0 1727.7,341.4 1768.6,329.4 1809.5,327.4 1850.4,301.2 1891.3,323.6" fill="none" stroke="#8a8a8a" stroke-width="2.6" stroke-linejoin="round"/>
<polyline clip-path="url(#gclip)" points="1490.4,552.4 1492.4,533.4 1494.4,517.8 1496.4,504.9 1498.4,493.8 1500.4,482.1 1502.4,472.7 1504.4,464.3 1506.4,456.6 1508.4,449.6 1510.4,443.2 1512.4,438.2 1514.4,433.5 1516.4,429.3 1518.4,425.3 1520.5,421.7 1522.5,418.2 1524.5,414.9 1526.5,411.8 1528.5,408.9 1530.5,406.2 1532.5,403.6 1534.5,401.1 1536.5,398.8 1538.5,396.5 1540.5,394.4 1542.5,392.5 1544.5,390.6 1546.5,388.9 1548.5,387.2 1550.5,385.5 1552.5,384.0 1554.5,382.5 1556.5,381.0 1558.5,379.6 1560.5,378.3 1562.5,377.0 1564.6,375.7 1566.6,374.5 1568.6,373.4 1570.6,372.3 1572.6,371.3 1574.6,370.3 1576.6,369.3 1578.6,368.4 1580.6,367.5 1582.6,366.6 1584.6,365.7 1586.6,364.9 1588.6,364.1 1590.6,363.3 1592.6,362.5 1594.6,361.8 1596.6,361.1 1598.6,360.3 1600.6,359.7 1602.6,359.0 1604.6,358.3 1606.6,357.7 1608.7,357.0 1610.7,356.4 1612.7,355.7 1614.7,355.1 1616.7,354.5 1618.7,354.0 1620.7,353.4 1622.7,352.8 1624.7,352.3 1626.7,351.7 1628.7,351.2 1630.7,350.7 1632.7,350.2 1634.7,349.7 1636.7,349.2 1638.7,348.7 1640.7,348.2 1642.7,347.8 1644.7,347.3 1646.7,346.9 1648.7,346.4 1650.7,346.0 1652.8,345.5 1654.8,345.1 1656.8,344.6 1658.8,344.2 1660.8,343.8 1662.8,343.4 1664.8,343.0 1666.8,342.6 1668.8,342.2 1670.8,341.8 1672.8,341.4 1674.8,341.1 1676.8,340.7 1678.8,340.3 1680.8,340.0 1682.8,339.6 1684.8,339.3 1686.8,338.9 1688.8,338.6 1690.8,338.2 1692.8,337.9 1694.9,337.6 1696.9,337.2 1698.9,336.9 1700.9,336.6 1702.9,336.3 1704.9,336.1 1706.9,335.8 1708.9,335.6 1710.9,335.3 1712.9,335.1 1714.9,334.9 1716.9,334.6 1718.9,334.4 1720.9,334.2 1722.9,334.0 1724.9,333.7 1726.9,333.5 1728.9,333.3 1730.9,333.1 1732.9,332.9 1734.9,332.7 1736.9,332.5 1739.0,332.3 1741.0,332.1 1743.0,331.9 1745.0,331.7 1747.0,331.5 1749.0,331.3 1751.0,331.1 1753.0,330.9 1755.0,330.7 1757.0,330.5 1759.0,330.3 1761.0,330.2 1763.0,330.0 1765.0,329.8 1767.0,329.6 1769.0,329.5 1771.0,329.3 1773.0,329.1 1775.0,329.0 1777.0,328.8 1779.0,328.6 1781.0,328.5 1783.1,328.3 1785.1,328.2 1787.1,328.0 1789.1,327.8 1791.1,327.7 1793.1,327.5 1795.1,327.4 1797.1,327.2 1799.1,327.1 1801.1,327.0 1803.1,326.8 1805.1,326.7 1807.1,326.5 1809.1,326.4 1811.1,326.2 1813.1,326.1 1815.1,326.0 1817.1,325.8 1819.1,325.7 1821.1,325.6 1823.1,325.4 1825.1,325.3 1827.2,325.2 1829.2,325.0 1831.2,324.9 1833.2,324.8 1835.2,324.7 1837.2,324.5 1839.2,324.4 1841.2,324.3 1843.2,324.2 1845.2,324.1 1847.2,323.9 1849.2,323.8 1851.2,323.7 1853.2,323.6 1855.2,323.5 1857.2,323.4 1859.2,323.2 1861.2,323.1 1863.2,323.0 1865.2,322.9 1867.2,322.8 1869.2,322.7 1871.3,322.6 1873.3,322.5 1875.3,322.4 1877.3,322.3 1879.3,322.2 1881.3,322.1 1883.3,322.0 1885.3,321.9 1887.3,321.8 1889.3,321.7 1891.3,321.8" fill="none" stroke="#ffff00" stroke-width="2.8" stroke-linejoin="round"/>
<text x="1510.0" y="559.0" font-size="33.43" fill="#f0f0f0" textLength="326.7" lengthAdjust="spacingAndGlyphs" >Average Gamma: 2.192</text>
<rect x="200" y="580" width="1719" height="144" fill="#000"/>
<text x="0" y="0" font-size="13.5" fill="#f0f0f0" transform="translate(313,631) rotate(-90)" textLength="38" lengthAdjust="spacingAndGlyphs">Actual</text>
<text x="0" y="0" font-size="13.5" fill="#f0f0f0" transform="translate(313,693) rotate(-90)" textLength="37" lengthAdjust="spacingAndGlyphs">Target</text>
<rect x="322.5" y="587" width="124" height="56" fill="#060609"/>
<rect x="322.5" y="643" width="124" height="56" fill="#020202"/>
<rect x="323.0" y="587.5" width="123" height="111" fill="none" stroke="#ffffff" stroke-width="1"/>
<rect x="324.0" y="588.5" width="121" height="109" fill="none" stroke="#b8b8b8" stroke-width="0.8" opacity="0.5"/>
<text x="384.5" y="714.8" font-size="12.21" fill="#f0f0f0" textLength="6.9" lengthAdjust="spacingAndGlyphs" text-anchor="middle" stroke="#f0f0f0" stroke-width="0.25">0</text>
<rect x="467.2" y="587" width="124" height="56" fill="#1c1e1d"/>
<rect x="467.2" y="643" width="124" height="56" fill="#1b1b1b"/>
<rect x="467.7" y="587.5" width="123" height="111" fill="none" stroke="#ffffff" stroke-width="1"/>
<rect x="468.7" y="588.5" width="121" height="109" fill="none" stroke="#b8b8b8" stroke-width="0.8" opacity="0.5"/>
<text x="529.2" y="714.8" font-size="12.21" fill="#f0f0f0" textLength="13.8" lengthAdjust="spacingAndGlyphs" text-anchor="middle" stroke="#f0f0f0" stroke-width="0.25">10</text>
<rect x="611.9" y="587" width="124" height="56" fill="#323433"/>
<rect x="611.9" y="643" width="124" height="56" fill="#323232"/>
<rect x="612.4" y="587.5" width="123" height="111" fill="none" stroke="#ffffff" stroke-width="1"/>
<rect x="613.4" y="588.5" width="121" height="109" fill="none" stroke="#b8b8b8" stroke-width="0.8" opacity="0.5"/>
<text x="673.9" y="714.8" font-size="12.21" fill="#f0f0f0" textLength="13.8" lengthAdjust="spacingAndGlyphs" text-anchor="middle" stroke="#f0f0f0" stroke-width="0.25">20</text>
<rect x="756.6" y="587" width="124" height="56" fill="#4b4d4c"/>
<rect x="756.6" y="643" width="124" height="56" fill="#4a4a4a"/>
<rect x="757.1" y="587.5" width="123" height="111" fill="none" stroke="#ffffff" stroke-width="1"/>
<rect x="758.1" y="588.5" width="121" height="109" fill="none" stroke="#b8b8b8" stroke-width="0.8" opacity="0.5"/>
<text x="818.6" y="714.8" font-size="12.21" fill="#f0f0f0" textLength="13.8" lengthAdjust="spacingAndGlyphs" text-anchor="middle" stroke="#f0f0f0" stroke-width="0.25">30</text>
<rect x="901.3" y="587" width="124" height="56" fill="#676968"/>
<rect x="901.3" y="643" width="124" height="56" fill="#636363"/>
<rect x="901.8" y="587.5" width="123" height="111" fill="none" stroke="#ffffff" stroke-width="1"/>
<rect x="902.8" y="588.5" width="121" height="109" fill="none" stroke="#b8b8b8" stroke-width="0.8" opacity="0.5"/>
<text x="963.3" y="714.8" font-size="12.21" fill="#f0f0f0" textLength="13.8" lengthAdjust="spacingAndGlyphs" text-anchor="middle" stroke="#f0f0f0" stroke-width="0.25">40</text>
<rect x="1046.0" y="587" width="124" height="56" fill="#838584"/>
<rect x="1046.0" y="643" width="124" height="56" fill="#808080"/>
<rect x="1046.5" y="587.5" width="123" height="111" fill="none" stroke="#ffffff" stroke-width="1"/>
<rect x="1047.5" y="588.5" width="121" height="109" fill="none" stroke="#b8b8b8" stroke-width="0.8" opacity="0.5"/>
<text x="1108.0" y="714.8" font-size="12.21" fill="#f0f0f0" textLength="13.8" lengthAdjust="spacingAndGlyphs" text-anchor="middle" stroke="#f0f0f0" stroke-width="0.25">50</text>
<rect x="1190.7" y="587" width="124" height="56" fill="#979b9b"/>
<rect x="1190.7" y="643" width="124" height="56" fill="#9c9c9c"/>
<rect x="1191.2" y="587.5" width="123" height="111" fill="none" stroke="#ffffff" stroke-width="1"/>
<rect x="1192.2" y="588.5" width="121" height="109" fill="none" stroke="#b8b8b8" stroke-width="0.8" opacity="0.5"/>
<text x="1252.7" y="714.8" font-size="12.21" fill="#f0f0f0" textLength="13.8" lengthAdjust="spacingAndGlyphs" text-anchor="middle" stroke="#f0f0f0" stroke-width="0.25">60</text>
<rect x="1335.4" y="587" width="124" height="56" fill="#b0b4b2"/>
<rect x="1335.4" y="643" width="124" height="56" fill="#b4b4b4"/>
<rect x="1335.9" y="587.5" width="123" height="111" fill="none" stroke="#ffffff" stroke-width="1"/>
<rect x="1336.9" y="588.5" width="121" height="109" fill="none" stroke="#b8b8b8" stroke-width="0.8" opacity="0.5"/>
<text x="1397.4" y="714.8" font-size="12.21" fill="#f0f0f0" textLength="13.8" lengthAdjust="spacingAndGlyphs" text-anchor="middle" stroke="#f0f0f0" stroke-width="0.25">70</text>
<rect x="1480.1" y="587" width="124" height="56" fill="#c9cfcc"/>
<rect x="1480.1" y="643" width="124" height="56" fill="#cfcfcf"/>
<rect x="1480.6" y="587.5" width="123" height="111" fill="none" stroke="#ffffff" stroke-width="1"/>
<rect x="1481.6" y="588.5" width="121" height="109" fill="none" stroke="#b8b8b8" stroke-width="0.8" opacity="0.5"/>
<text x="1542.1" y="714.8" font-size="12.21" fill="#f0f0f0" textLength="13.8" lengthAdjust="spacingAndGlyphs" text-anchor="middle" stroke="#f0f0f0" stroke-width="0.25">80</text>
<rect x="1624.8" y="587" width="124" height="56" fill="#e2e8e7"/>
<rect x="1624.8" y="643" width="124" height="56" fill="#e8e8e8"/>
<rect x="1625.3" y="587.5" width="123" height="111" fill="none" stroke="#ffffff" stroke-width="1"/>
<rect x="1626.3" y="588.5" width="121" height="109" fill="none" stroke="#b8b8b8" stroke-width="0.8" opacity="0.5"/>
<text x="1686.8" y="714.8" font-size="12.21" fill="#f0f0f0" textLength="13.8" lengthAdjust="spacingAndGlyphs" text-anchor="middle" stroke="#f0f0f0" stroke-width="0.25">90</text>
<rect x="1769.5" y="587" width="124" height="56" fill="#f8fffc"/>
<rect x="1769.5" y="643" width="124" height="56" fill="#fefefe"/>
<rect x="1770.0" y="587.5" width="123" height="111" fill="none" stroke="#ffffff" stroke-width="1"/>
<rect x="1771.0" y="588.5" width="121" height="109" fill="none" stroke="#b8b8b8" stroke-width="0.8" opacity="0.5"/>
<text x="1831.5" y="714.8" font-size="12.21" fill="#f0f0f0" textLength="20.7" lengthAdjust="spacingAndGlyphs" text-anchor="middle" stroke="#f0f0f0" stroke-width="0.25">100</text>
<text x="221.0" y="799.4" font-size="34.30" fill="#f0f0f0" textLength="228.3" lengthAdjust="spacingAndGlyphs" >Current Reading</text>
<text x="221.0" y="844.1" font-size="26.60" fill="#f0f0f0" textLength="93.9" lengthAdjust="spacingAndGlyphs" >x: 0.309</text>
<text x="375.7" y="844.1" font-size="26.60" fill="#f0f0f0" textLength="108.5" lengthAdjust="spacingAndGlyphs" >y: 0.3305</text>
<text x="221.0" y="880.6" font-size="26.60" fill="#f0f0f0" textLength="117.5" lengthAdjust="spacingAndGlyphs" >u': 0.1947</text>
<text x="375.7" y="880.6" font-size="26.60" fill="#f0f0f0" textLength="115.2" lengthAdjust="spacingAndGlyphs" >v': 0.4686</text>
<text x="221.0" y="918.9" font-size="26.60" fill="#f0f0f0" textLength="196.1" lengthAdjust="spacingAndGlyphs" >cd/m²: 394.6308</text>
<text x="221.0" y="956.1" font-size="26.60" fill="#f0f0f0" textLength="162.3" lengthAdjust="spacingAndGlyphs" >ΔE 2000: 3.76</text>
<text x="649.6" y="761.3" font-size="15.70" fill="#e0e0e0" textLength="77.8" lengthAdjust="spacingAndGlyphs" >CIE 1931 xy</text>
<linearGradient id="cs0" x1="0" x2="1" y1="0" y2="0"><stop offset="0.0" stop-color="rgb(143,247,200)"/><stop offset="0.25" stop-color="rgb(176,252,200)"/><stop offset="0.5" stop-color="rgb(216,255,204)"/><stop offset="0.75" stop-color="rgb(252,255,212)"/><stop offset="1.0" stop-color="rgb(255,223,179)"/></linearGradient>
<linearGradient id="cs1" x1="0" x2="1" y1="0" y2="0"><stop offset="0.0" stop-color="rgb(143,248,201)"/><stop offset="0.25" stop-color="rgb(176,252,201)"/><stop offset="0.5" stop-color="rgb(216,255,205)"/><stop offset="0.75" stop-color="rgb(252,255,212)"/><stop offset="1.0" stop-color="rgb(255,222,179)"/></linearGradient>
<linearGradient id="cs2" x1="0" x2="1" y1="0" y2="0"><stop offset="0.0" stop-color="rgb(142,248,202)"/><stop offset="0.25" stop-color="rgb(177,252,202)"/><stop offset="0.5" stop-color="rgb(217,255,207)"/><stop offset="0.75" stop-color="rgb(252,255,213)"/><stop offset="1.0" stop-color="rgb(255,221,179)"/></linearGradient>
<linearGradient id="cs3" x1="0" x2="1" y1="0" y2="0"><stop offset="0.0" stop-color="rgb(142,248,203)"/><stop offset="0.25" stop-color="rgb(177,252,204)"/><stop offset="0.5" stop-color="rgb(218,255,209)"/><stop offset="0.75" stop-color="rgb(252,255,213)"/><stop offset="1.0" stop-color="rgb(255,220,179)"/></linearGradient>
<linearGradient id="cs4" x1="0" x2="1" y1="0" y2="0"><stop offset="0.0" stop-color="rgb(141,248,204)"/><stop offset="0.25" stop-color="rgb(178,252,205)"/><stop offset="0.5" stop-color="rgb(219,255,210)"/><stop offset="0.75" stop-color="rgb(252,255,214)"/><stop offset="1.0" stop-color="rgb(255,219,178)"/></linearGradient>
<linearGradient id="cs5" x1="0" x2="1" y1="0" y2="0"><stop offset="0.0" stop-color="rgb(141,248,205)"/><stop offset="0.25" stop-color="rgb(178,253,206)"/><stop offset="0.5" stop-color="rgb(220,255,212)"/><stop offset="0.75" stop-color="rgb(253,255,214)"/><stop offset="1.0" stop-color="rgb(255,218,178)"/></linearGradient>
<linearGradient id="cs6" x1="0" x2="1" y1="0" y2="0"><stop offset="0.0" stop-color="rgb(140,248,206)"/><stop offset="0.25" stop-color="rgb(179,253,208)"/><stop offset="0.5" stop-color="rgb(220,255,213)"/><stop offset="0.75" stop-color="rgb(253,255,215)"/><stop offset="1.0" stop-color="rgb(255,217,178)"/></linearGradient>
<linearGradient id="cs7" x1="0" x2="1" y1="0" y2="0"><stop offset="0.0" stop-color="rgb(140,248,207)"/><stop offset="0.25" stop-color="rgb(179,253,209)"/><stop offset="0.5" stop-color="rgb(221,255,215)"/><stop offset="0.75" stop-color="rgb(253,255,215)"/><stop offset="1.0" stop-color="rgb(255,216,178)"/></linearGradient>
<linearGradient id="cs8" x1="0" x2="1" y1="0" y2="0"><stop offset="0.0" stop-color="rgb(139,248,208)"/><stop offset="0.25" stop-color="rgb(180,253,210)"/><stop offset="0.5" stop-color="rgb(222,255,217)"/><stop offset="0.75" stop-color="rgb(253,255,216)"/><stop offset="1.0" stop-color="rgb(255,215,177)"/></linearGradient>
<linearGradient id="cs9" x1="0" x2="1" y1="0" y2="0"><stop offset="0.0" stop-color="rgb(139,248,209)"/><stop offset="0.25" stop-color="rgb(180,253,212)"/><stop offset="0.5" stop-color="rgb(223,255,218)"/><stop offset="0.75" stop-color="rgb(253,255,216)"/><stop offset="1.0" stop-color="rgb(255,214,177)"/></linearGradient>
<linearGradient id="cs10" x1="0" x2="1" y1="0" y2="0"><stop offset="0.0" stop-color="rgb(138,248,210)"/><stop offset="0.25" stop-color="rgb(181,254,213)"/><stop offset="0.5" stop-color="rgb(224,255,220)"/><stop offset="0.75" stop-color="rgb(254,255,217)"/><stop offset="1.0" stop-color="rgb(255,213,177)"/></linearGradient>
<linearGradient id="cs11" x1="0" x2="1" y1="0" y2="0"><stop offset="0.0" stop-color="rgb(138,248,211)"/><stop offset="0.25" stop-color="rgb(181,254,214)"/><stop offset="0.5" stop-color="rgb(224,255,221)"/><stop offset="0.75" stop-color="rgb(254,255,217)"/><stop offset="1.0" stop-color="rgb(255,212,177)"/></linearGradient>
<linearGradient id="cs12" x1="0" x2="1" y1="0" y2="0"><stop offset="0.0" stop-color="rgb(137,248,212)"/><stop offset="0.25" stop-color="rgb(182,254,216)"/><stop offset="0.5" stop-color="rgb(225,255,223)"/><stop offset="0.75" stop-color="rgb(254,255,218)"/><stop offset="1.0" stop-color="rgb(255,211,176)"/></linearGradient>
<linearGradient id="cs13" x1="0" x2="1" y1="0" y2="0"><stop offset="0.0" stop-color="rgb(137,248,213)"/><stop offset="0.25" stop-color="rgb(182,254,217)"/><stop offset="0.5" stop-color="rgb(226,255,224)"/><stop offset="0.75" stop-color="rgb(254,255,218)"/><stop offset="1.0" stop-color="rgb(255,210,176)"/></linearGradient>
<linearGradient id="cs14" x1="0" x2="1" y1="0" y2="0"><stop offset="0.0" stop-color="rgb(136,248,214)"/><stop offset="0.25" stop-color="rgb(183,254,218)"/><stop offset="0.5" stop-color="rgb(227,255,226)"/><stop offset="0.75" stop-color="rgb(254,255,219)"/><stop offset="1.0" stop-color="rgb(255,209,176)"/></linearGradient>
<linearGradient id="cs15" x1="0" x2="1" y1="0" y2="0"><stop offset="0.0" stop-color="rgb(136,248,216)"/><stop offset="0.25" stop-color="rgb(184,255,220)"/><stop offset="0.5" stop-color="rgb(228,254,228)"/><stop offset="0.75" stop-color="rgb(255,254,220)"/><stop offset="1.0" stop-color="rgb(255,207,176)"/></linearGradient>
<linearGradient id="cs16" x1="0" x2="1" y1="0" y2="0"><stop offset="0.0" stop-color="rgb(137,248,218)"/><stop offset="0.25" stop-color="rgb(185,255,222)"/><stop offset="0.5" stop-color="rgb(229,254,229)"/><stop offset="0.75" stop-color="rgb(255,253,221)"/><stop offset="1.0" stop-color="rgb(255,206,176)"/></linearGradient>
<linearGradient id="cs17" x1="0" x2="1" y1="0" y2="0"><stop offset="0.0" stop-color="rgb(139,248,220)"/><stop offset="0.25" stop-color="rgb(187,255,224)"/><stop offset="0.5" stop-color="rgb(230,254,231)"/><stop offset="0.75" stop-color="rgb(255,252,222)"/><stop offset="1.0" stop-color="rgb(255,205,177)"/></linearGradient>
<linearGradient id="cs18" x1="0" x2="1" y1="0" y2="0"><stop offset="0.0" stop-color="rgb(140,248,223)"/><stop offset="0.25" stop-color="rgb(188,255,226)"/><stop offset="0.5" stop-color="rgb(231,254,233)"/><stop offset="0.75" stop-color="rgb(255,251,223)"/><stop offset="1.0" stop-color="rgb(255,204,177)"/></linearGradient>
<linearGradient id="cs19" x1="0" x2="1" y1="0" y2="0"><stop offset="0.0" stop-color="rgb(142,249,225)"/><stop offset="0.25" stop-color="rgb(190,255,228)"/><stop offset="0.5" stop-color="rgb(232,254,235)"/><stop offset="0.75" stop-color="rgb(255,250,224)"/><stop offset="1.0" stop-color="rgb(255,203,178)"/></linearGradient>
<linearGradient id="cs20" x1="0" x2="1" y1="0" y2="0"><stop offset="0.0" stop-color="rgb(143,249,227)"/><stop offset="0.25" stop-color="rgb(191,255,230)"/><stop offset="0.5" stop-color="rgb(233,254,236)"/><stop offset="0.75" stop-color="rgb(255,250,225)"/><stop offset="1.0" stop-color="rgb(255,202,178)"/></linearGradient>
<linearGradient id="cs21" x1="0" x2="1" y1="0" y2="0"><stop offset="0.0" stop-color="rgb(145,249,230)"/><stop offset="0.25" stop-color="rgb(193,255,232)"/><stop offset="0.5" stop-color="rgb(234,253,238)"/><stop offset="0.75" stop-color="rgb(255,249,226)"/><stop offset="1.0" stop-color="rgb(255,201,179)"/></linearGradient>
<linearGradient id="cs22" x1="0" x2="1" y1="0" y2="0"><stop offset="0.0" stop-color="rgb(147,249,232)"/><stop offset="0.25" stop-color="rgb(195,255,234)"/><stop offset="0.5" stop-color="rgb(235,253,240)"/><stop offset="0.75" stop-color="rgb(255,248,227)"/><stop offset="1.0" stop-color="rgb(255,200,179)"/></linearGradient>
<linearGradient id="cs23" x1="0" x2="1" y1="0" y2="0"><stop offset="0.0" stop-color="rgb(148,250,235)"/><stop offset="0.25" stop-color="rgb(196,255,236)"/><stop offset="0.5" stop-color="rgb(236,253,242)"/><stop offset="0.75" stop-color="rgb(255,247,228)"/><stop offset="1.0" stop-color="rgb(255,199,180)"/></linearGradient>
<linearGradient id="cs24" x1="0" x2="1" y1="0" y2="0"><stop offset="0.0" stop-color="rgb(150,250,237)"/><stop offset="0.25" stop-color="rgb(198,255,239)"/><stop offset="0.5" stop-color="rgb(237,253,244)"/><stop offset="0.75" stop-color="rgb(255,246,229)"/><stop offset="1.0" stop-color="rgb(255,198,180)"/></linearGradient>
<linearGradient id="cs25" x1="0" x2="1" y1="0" y2="0"><stop offset="0.0" stop-color="rgb(151,250,239)"/><stop offset="0.25" stop-color="rgb(199,255,241)"/><stop offset="0.5" stop-color="rgb(238,253,245)"/><stop offset="0.75" stop-color="rgb(255,245,230)"/><stop offset="1.0" stop-color="rgb(255,197,181)"/></linearGradient>
<linearGradient id="cs26" x1="0" x2="1" y1="0" y2="0"><stop offset="0.0" stop-color="rgb(153,250,242)"/><stop offset="0.25" stop-color="rgb(201,255,243)"/><stop offset="0.5" stop-color="rgb(239,252,247)"/><stop offset="0.75" stop-color="rgb(255,244,231)"/><stop offset="1.0" stop-color="rgb(255,196,181)"/></linearGradient>
<linearGradient id="cs27" x1="0" x2="1" y1="0" y2="0"><stop offset="0.0" stop-color="rgb(155,251,244)"/><stop offset="0.25" stop-color="rgb(203,255,245)"/><stop offset="0.5" stop-color="rgb(240,252,249)"/><stop offset="0.75" stop-color="rgb(255,243,232)"/><stop offset="1.0" stop-color="rgb(255,195,182)"/></linearGradient>
<linearGradient id="cs28" x1="0" x2="1" y1="0" y2="0"><stop offset="0.0" stop-color="rgb(156,251,246)"/><stop offset="0.25" stop-color="rgb(204,255,247)"/><stop offset="0.5" stop-color="rgb(241,252,251)"/><stop offset="0.75" stop-color="rgb(255,242,233)"/><stop offset="1.0" stop-color="rgb(255,194,182)"/></linearGradient>
<linearGradient id="cs29" x1="0" x2="1" y1="0" y2="0"><stop offset="0.0" stop-color="rgb(158,251,249)"/><stop offset="0.25" stop-color="rgb(206,255,249)"/><stop offset="0.5" stop-color="rgb(242,252,252)"/><stop offset="0.75" stop-color="rgb(255,241,234)"/><stop offset="1.0" stop-color="rgb(255,193,183)"/></linearGradient>
<linearGradient id="cs30" x1="0" x2="1" y1="0" y2="0"><stop offset="0.0" stop-color="rgb(159,251,251)"/><stop offset="0.25" stop-color="rgb(207,255,251)"/><stop offset="0.5" stop-color="rgb(243,252,254)"/><stop offset="0.75" stop-color="rgb(255,240,235)"/><stop offset="1.0" stop-color="rgb(255,192,183)"/></linearGradient>
<linearGradient id="cs31" x1="0" x2="1" y1="0" y2="0"><stop offset="0.0" stop-color="rgb(160,251,252)"/><stop offset="0.25" stop-color="rgb(208,253,252)"/><stop offset="0.5" stop-color="rgb(244,250,255)"/><stop offset="0.75" stop-color="rgb(255,238,235)"/><stop offset="1.0" stop-color="rgb(255,191,184)"/></linearGradient>
<linearGradient id="cs32" x1="0" x2="1" y1="0" y2="0"><stop offset="0.0" stop-color="rgb(161,250,252)"/><stop offset="0.25" stop-color="rgb(209,252,252)"/><stop offset="0.5" stop-color="rgb(244,249,255)"/><stop offset="0.75" stop-color="rgb(255,237,235)"/><stop offset="1.0" stop-color="rgb(255,190,185)"/></linearGradient>
<linearGradient id="cs33" x1="0" x2="1" y1="0" y2="0"><stop offset="0.0" stop-color="rgb(163,248,252)"/><stop offset="0.25" stop-color="rgb(210,250,252)"/><stop offset="0.5" stop-color="rgb(244,248,255)"/><stop offset="0.75" stop-color="rgb(255,235,235)"/><stop offset="1.0" stop-color="rgb(255,188,186)"/></linearGradient>
<linearGradient id="cs34" x1="0" x2="1" y1="0" y2="0"><stop offset="0.0" stop-color="rgb(164,247,252)"/><stop offset="0.25" stop-color="rgb(211,249,252)"/><stop offset="0.5" stop-color="rgb(245,246,255)"/><stop offset="0.75" stop-color="rgb(255,233,234)"/><stop offset="1.0" stop-color="rgb(255,187,187)"/></linearGradient>
<linearGradient id="cs35" x1="0" x2="1" y1="0" y2="0"><stop offset="0.0" stop-color="rgb(165,246,252)"/><stop offset="0.25" stop-color="rgb(211,247,252)"/><stop offset="0.5" stop-color="rgb(245,245,255)"/><stop offset="0.75" stop-color="rgb(255,232,234)"/><stop offset="1.0" stop-color="rgb(255,186,187)"/></linearGradient>
<linearGradient id="cs36" x1="0" x2="1" y1="0" y2="0"><stop offset="0.0" stop-color="rgb(166,245,253)"/><stop offset="0.25" stop-color="rgb(212,246,253)"/><stop offset="0.5" stop-color="rgb(245,244,255)"/><stop offset="0.75" stop-color="rgb(255,230,234)"/><stop offset="1.0" stop-color="rgb(255,185,188)"/></linearGradient>
<linearGradient id="cs37" x1="0" x2="1" y1="0" y2="0"><stop offset="0.0" stop-color="rgb(167,244,253)"/><stop offset="0.25" stop-color="rgb(213,244,253)"/><stop offset="0.5" stop-color="rgb(245,242,255)"/><stop offset="0.75" stop-color="rgb(255,229,234)"/><stop offset="1.0" stop-color="rgb(255,184,189)"/></linearGradient>
<linearGradient id="cs38" x1="0" x2="1" y1="0" y2="0"><stop offset="0.0" stop-color="rgb(168,243,253)"/><stop offset="0.25" stop-color="rgb(214,243,253)"/><stop offset="0.5" stop-color="rgb(246,241,255)"/><stop offset="0.75" stop-color="rgb(255,227,233)"/><stop offset="1.0" stop-color="rgb(255,183,190)"/></linearGradient>
<linearGradient id="cs39" x1="0" x2="1" y1="0" y2="0"><stop offset="0.0" stop-color="rgb(169,242,253)"/><stop offset="0.25" stop-color="rgb(215,241,253)"/><stop offset="0.5" stop-color="rgb(246,240,255)"/><stop offset="0.75" stop-color="rgb(255,225,233)"/><stop offset="1.0" stop-color="rgb(255,182,191)"/></linearGradient>
<linearGradient id="cs40" x1="0" x2="1" y1="0" y2="0"><stop offset="0.0" stop-color="rgb(170,241,253)"/><stop offset="0.25" stop-color="rgb(215,240,253)"/><stop offset="0.5" stop-color="rgb(246,239,255)"/><stop offset="0.75" stop-color="rgb(255,224,233)"/><stop offset="1.0" stop-color="rgb(255,181,191)"/></linearGradient>
<linearGradient id="cs41" x1="0" x2="1" y1="0" y2="0"><stop offset="0.0" stop-color="rgb(171,240,254)"/><stop offset="0.25" stop-color="rgb(216,238,254)"/><stop offset="0.5" stop-color="rgb(246,237,255)"/><stop offset="0.75" stop-color="rgb(255,222,233)"/><stop offset="1.0" stop-color="rgb(255,180,192)"/></linearGradient>
<linearGradient id="cs42" x1="0" x2="1" y1="0" y2="0"><stop offset="0.0" stop-color="rgb(172,239,254)"/><stop offset="0.25" stop-color="rgb(217,237,254)"/><stop offset="0.5" stop-color="rgb(247,236,255)"/><stop offset="0.75" stop-color="rgb(255,221,232)"/><stop offset="1.0" stop-color="rgb(255,179,193)"/></linearGradient>
<linearGradient id="cs43" x1="0" x2="1" y1="0" y2="0"><stop offset="0.0" stop-color="rgb(173,238,254)"/><stop offset="0.25" stop-color="rgb(218,235,254)"/><stop offset="0.5" stop-color="rgb(247,235,255)"/><stop offset="0.75" stop-color="rgb(255,219,232)"/><stop offset="1.0" stop-color="rgb(255,178,194)"/></linearGradient>
<linearGradient id="cs44" x1="0" x2="1" y1="0" y2="0"><stop offset="0.0" stop-color="rgb(174,237,254)"/><stop offset="0.25" stop-color="rgb(218,233,254)"/><stop offset="0.5" stop-color="rgb(247,233,255)"/><stop offset="0.75" stop-color="rgb(255,218,232)"/><stop offset="1.0" stop-color="rgb(255,177,194)"/></linearGradient>
<linearGradient id="cs45" x1="0" x2="1" y1="0" y2="0"><stop offset="0.0" stop-color="rgb(175,236,254)"/><stop offset="0.25" stop-color="rgb(219,232,254)"/><stop offset="0.5" stop-color="rgb(247,232,255)"/><stop offset="0.75" stop-color="rgb(255,216,232)"/><stop offset="1.0" stop-color="rgb(255,176,195)"/></linearGradient>
<linearGradient id="cs46" x1="0" x2="1" y1="0" y2="0"><stop offset="0.0" stop-color="rgb(176,234,255)"/><stop offset="0.25" stop-color="rgb(219,230,255)"/><stop offset="0.5" stop-color="rgb(248,230,255)"/><stop offset="0.75" stop-color="rgb(255,214,231)"/><stop offset="1.0" stop-color="rgb(255,174,195)"/></linearGradient>
<linearGradient id="cs47" x1="0" x2="1" y1="0" y2="0"><stop offset="0.0" stop-color="rgb(176,232,255)"/><stop offset="0.25" stop-color="rgb(219,228,255)"/><stop offset="0.5" stop-color="rgb(248,228,255)"/><stop offset="0.75" stop-color="rgb(255,211,230)"/><stop offset="1.0" stop-color="rgb(255,172,195)"/></linearGradient>
<linearGradient id="cs48" x1="0" x2="1" y1="0" y2="0"><stop offset="0.0" stop-color="rgb(176,229,255)"/><stop offset="0.25" stop-color="rgb(219,227,255)"/><stop offset="0.5" stop-color="rgb(248,227,255)"/><stop offset="0.75" stop-color="rgb(255,208,229)"/><stop offset="1.0" stop-color="rgb(255,170,194)"/></linearGradient>
<linearGradient id="cs49" x1="0" x2="1" y1="0" y2="0"><stop offset="0.0" stop-color="rgb(176,227,255)"/><stop offset="0.25" stop-color="rgb(219,225,255)"/><stop offset="0.5" stop-color="rgb(248,225,255)"/><stop offset="0.75" stop-color="rgb(255,206,229)"/><stop offset="1.0" stop-color="rgb(255,168,194)"/></linearGradient>
<linearGradient id="cs50" x1="0" x2="1" y1="0" y2="0"><stop offset="0.0" stop-color="rgb(176,224,255)"/><stop offset="0.25" stop-color="rgb(218,223,255)"/><stop offset="0.5" stop-color="rgb(249,223,255)"/><stop offset="0.75" stop-color="rgb(255,203,228)"/><stop offset="1.0" stop-color="rgb(255,166,193)"/></linearGradient>
<linearGradient id="cs51" x1="0" x2="1" y1="0" y2="0"><stop offset="0.0" stop-color="rgb(176,222,255)"/><stop offset="0.25" stop-color="rgb(218,221,255)"/><stop offset="0.5" stop-color="rgb(249,221,255)"/><stop offset="0.75" stop-color="rgb(255,201,227)"/><stop offset="1.0" stop-color="rgb(255,164,193)"/></linearGradient>
<linearGradient id="cs52" x1="0" x2="1" y1="0" y2="0"><stop offset="0.0" stop-color="rgb(176,220,255)"/><stop offset="0.25" stop-color="rgb(218,219,255)"/><stop offset="0.5" stop-color="rgb(249,219,255)"/><stop offset="0.75" stop-color="rgb(255,198,226)"/><stop offset="1.0" stop-color="rgb(255,161,192)"/></linearGradient>
<linearGradient id="cs53" x1="0" x2="1" y1="0" y2="0"><stop offset="0.0" stop-color="rgb(176,217,255)"/><stop offset="0.25" stop-color="rgb(217,217,255)"/><stop offset="0.5" stop-color="rgb(250,217,255)"/><stop offset="0.75" stop-color="rgb(255,195,225)"/><stop offset="1.0" stop-color="rgb(255,159,191)"/></linearGradient>
<linearGradient id="cs54" x1="0" x2="1" y1="0" y2="0"><stop offset="0.0" stop-color="rgb(176,215,255)"/><stop offset="0.25" stop-color="rgb(217,215,255)"/><stop offset="0.5" stop-color="rgb(250,215,255)"/><stop offset="0.75" stop-color="rgb(255,193,225)"/><stop offset="1.0" stop-color="rgb(255,157,191)"/></linearGradient>
<linearGradient id="cs55" x1="0" x2="1" y1="0" y2="0"><stop offset="0.0" stop-color="rgb(176,213,255)"/><stop offset="0.25" stop-color="rgb(217,214,255)"/><stop offset="0.5" stop-color="rgb(250,214,255)"/><stop offset="0.75" stop-color="rgb(255,190,224)"/><stop offset="1.0" stop-color="rgb(255,155,190)"/></linearGradient>
<linearGradient id="cs56" x1="0" x2="1" y1="0" y2="0"><stop offset="0.0" stop-color="rgb(176,210,255)"/><stop offset="0.25" stop-color="rgb(217,212,255)"/><stop offset="0.5" stop-color="rgb(250,212,255)"/><stop offset="0.75" stop-color="rgb(255,187,223)"/><stop offset="1.0" stop-color="rgb(255,153,190)"/></linearGradient>
<linearGradient id="cs57" x1="0" x2="1" y1="0" y2="0"><stop offset="0.0" stop-color="rgb(176,208,255)"/><stop offset="0.25" stop-color="rgb(216,210,255)"/><stop offset="0.5" stop-color="rgb(251,210,255)"/><stop offset="0.75" stop-color="rgb(255,185,222)"/><stop offset="1.0" stop-color="rgb(255,151,189)"/></linearGradient>
<linearGradient id="cs58" x1="0" x2="1" y1="0" y2="0"><stop offset="0.0" stop-color="rgb(176,205,255)"/><stop offset="0.25" stop-color="rgb(216,208,255)"/><stop offset="0.5" stop-color="rgb(251,208,255)"/><stop offset="0.75" stop-color="rgb(255,182,221)"/><stop offset="1.0" stop-color="rgb(255,149,189)"/></linearGradient>
<linearGradient id="cs59" x1="0" x2="1" y1="0" y2="0"><stop offset="0.0" stop-color="rgb(176,203,255)"/><stop offset="0.25" stop-color="rgb(216,206,255)"/><stop offset="0.5" stop-color="rgb(251,206,255)"/><stop offset="0.75" stop-color="rgb(255,179,221)"/><stop offset="1.0" stop-color="rgb(255,147,188)"/></linearGradient>
<linearGradient id="cs60" x1="0" x2="1" y1="0" y2="0"><stop offset="0.0" stop-color="rgb(176,201,255)"/><stop offset="0.25" stop-color="rgb(216,204,255)"/><stop offset="0.5" stop-color="rgb(251,204,255)"/><stop offset="0.75" stop-color="rgb(255,177,220)"/><stop offset="1.0" stop-color="rgb(255,145,188)"/></linearGradient>
<linearGradient id="cs61" x1="0" x2="1" y1="0" y2="0"><stop offset="0.0" stop-color="rgb(176,200,255)"/><stop offset="0.25" stop-color="rgb(216,204,255)"/><stop offset="0.5" stop-color="rgb(252,204,255)"/><stop offset="0.75" stop-color="rgb(255,176,220)"/><stop offset="1.0" stop-color="rgb(255,144,188)"/></linearGradient>
<clipPath id="cbg"><rect x="576.8" y="766.8" width="258.6" height="182.20000000000005"/></clipPath>
<g clip-path="url(#cbg)" shape-rendering="crispEdges">
<rect x="575.8" y="766" width="260.6" height="3" fill="url(#cs0)"/>
<rect x="575.8" y="769" width="260.6" height="3" fill="url(#cs1)"/>
<rect x="575.8" y="772" width="260.6" height="3" fill="url(#cs2)"/>
<rect x="575.8" y="775" width="260.6" height="3" fill="url(#cs3)"/>
<rect x="575.8" y="778" width="260.6" height="3" fill="url(#cs4)"/>
<rect x="575.8" y="781" width="260.6" height="3" fill="url(#cs5)"/>
<rect x="575.8" y="784" width="260.6" height="3" fill="url(#cs6)"/>
<rect x="575.8" y="787" width="260.6" height="3" fill="url(#cs7)"/>
<rect x="575.8" y="790" width="260.6" height="3" fill="url(#cs8)"/>
<rect x="575.8" y="793" width="260.6" height="3" fill="url(#cs9)"/>
<rect x="575.8" y="796" width="260.6" height="3" fill="url(#cs10)"/>
<rect x="575.8" y="799" width="260.6" height="3" fill="url(#cs11)"/>
<rect x="575.8" y="802" width="260.6" height="3" fill="url(#cs12)"/>
<rect x="575.8" y="805" width="260.6" height="3" fill="url(#cs13)"/>
<rect x="575.8" y="808" width="260.6" height="3" fill="url(#cs14)"/>
<rect x="575.8" y="811" width="260.6" height="3" fill="url(#cs15)"/>
<rect x="575.8" y="814" width="260.6" height="3" fill="url(#cs16)"/>
<rect x="575.8" y="817" width="260.6" height="3" fill="url(#cs17)"/>
<rect x="575.8" y="820" width="260.6" height="3" fill="url(#cs18)"/>
<rect x="575.8" y="823" width="260.6" height="3" fill="url(#cs19)"/>
<rect x="575.8" y="826" width="260.6" height="3" fill="url(#cs20)"/>
<rect x="575.8" y="829" width="260.6" height="3" fill="url(#cs21)"/>
<rect x="575.8" y="832" width="260.6" height="3" fill="url(#cs22)"/>
<rect x="575.8" y="835" width="260.6" height="3" fill="url(#cs23)"/>
<rect x="575.8" y="838" width="260.6" height="3" fill="url(#cs24)"/>
<rect x="575.8" y="841" width="260.6" height="3" fill="url(#cs25)"/>
<rect x="575.8" y="844" width="260.6" height="3" fill="url(#cs26)"/>
<rect x="575.8" y="847" width="260.6" height="3" fill="url(#cs27)"/>
<rect x="575.8" y="850" width="260.6" height="3" fill="url(#cs28)"/>
<rect x="575.8" y="853" width="260.6" height="3" fill="url(#cs29)"/>
<rect x="575.8" y="856" width="260.6" height="3" fill="url(#cs30)"/>
<rect x="575.8" y="859" width="260.6" height="3" fill="url(#cs31)"/>
<rect x="575.8" y="862" width="260.6" height="3" fill="url(#cs32)"/>
<rect x="575.8" y="865" width="260.6" height="3" fill="url(#cs33)"/>
<rect x="575.8" y="868" width="260.6" height="3" fill="url(#cs34)"/>
<rect x="575.8" y="871" width="260.6" height="3" fill="url(#cs35)"/>
<rect x="575.8" y="874" width="260.6" height="3" fill="url(#cs36)"/>
<rect x="575.8" y="877" width="260.6" height="3" fill="url(#cs37)"/>
<rect x="575.8" y="880" width="260.6" height="3" fill="url(#cs38)"/>
<rect x="575.8" y="883" width="260.6" height="3" fill="url(#cs39)"/>
<rect x="575.8" y="886" width="260.6" height="3" fill="url(#cs40)"/>
<rect x="575.8" y="889" width="260.6" height="3" fill="url(#cs41)"/>
<rect x="575.8" y="892" width="260.6" height="3" fill="url(#cs42)"/>
<rect x="575.8" y="895" width="260.6" height="3" fill="url(#cs43)"/>
<rect x="575.8" y="898" width="260.6" height="3" fill="url(#cs44)"/>
<rect x="575.8" y="901" width="260.6" height="3" fill="url(#cs45)"/>
<rect x="575.8" y="904" width="260.6" height="3" fill="url(#cs46)"/>
<rect x="575.8" y="907" width="260.6" height="3" fill="url(#cs47)"/>
<rect x="575.8" y="910" width="260.6" height="3" fill="url(#cs48)"/>
<rect x="575.8" y="913" width="260.6" height="3" fill="url(#cs49)"/>
<rect x="575.8" y="916" width="260.6" height="3" fill="url(#cs50)"/>
<rect x="575.8" y="919" width="260.6" height="3" fill="url(#cs51)"/>
<rect x="575.8" y="922" width="260.6" height="3" fill="url(#cs52)"/>
<rect x="575.8" y="925" width="260.6" height="3" fill="url(#cs53)"/>
<rect x="575.8" y="928" width="260.6" height="3" fill="url(#cs54)"/>
<rect x="575.8" y="931" width="260.6" height="3" fill="url(#cs55)"/>
<rect x="575.8" y="934" width="260.6" height="3" fill="url(#cs56)"/>
<rect x="575.8" y="937" width="260.6" height="3" fill="url(#cs57)"/>
<rect x="575.8" y="940" width="260.6" height="3" fill="url(#cs58)"/>
<rect x="575.8" y="943" width="260.6" height="3" fill="url(#cs59)"/>
<rect x="575.8" y="946" width="260.6" height="3" fill="url(#cs60)"/>
<rect x="575.8" y="949" width="260.6" height="3" fill="url(#cs61)"/>
</g>
<rect x="576.3" y="766.3" width="259.6" height="183.20000000000005" fill="none" stroke="#9a9a9a" stroke-width="1.4"/>
<clipPath id="cclip"><rect x="576.8" y="766.8" width="258.6" height="182.20000000000005"/></clipPath>
<path clip-path="url(#cclip)" d="M607 951 Q716 868 837 795.5" fill="none" stroke="#000" stroke-width="2.6"/>
<rect x="571.3" y="818.7" width="5" height="2" fill="#d0d0d0"/>
<text x="570.5" y="824.9" font-size="14.53" fill="#dcdcdc" textLength="30.5" lengthAdjust="spacingAndGlyphs" text-anchor="end" >0.34</text>
<rect x="571.3" y="891.6" width="5" height="2" fill="#d0d0d0"/>
<text x="570.5" y="897.8" font-size="14.53" fill="#dcdcdc" textLength="30.5" lengthAdjust="spacingAndGlyphs" text-anchor="end" >0.32</text>
<rect x="586.95" y="949.5" width="1.3" height="6.5" fill="#d0d0d0"/>
<text x="587.6" y="973.0" font-size="14.53" fill="#dcdcdc" textLength="29.5" lengthAdjust="spacingAndGlyphs" text-anchor="middle" >0.29</text>
<rect x="639.0500000000001" y="949.5" width="1.3" height="6.5" fill="#d0d0d0"/>
<text x="639.7" y="973.0" font-size="14.53" fill="#dcdcdc" textLength="21.0" lengthAdjust="spacingAndGlyphs" text-anchor="middle" >0.3</text>
<rect x="691.0500000000001" y="949.5" width="1.3" height="6.5" fill="#d0d0d0"/>
<text x="691.7" y="973.0" font-size="14.53" fill="#dcdcdc" textLength="29.5" lengthAdjust="spacingAndGlyphs" text-anchor="middle" >0.31</text>
<rect x="742.75" y="949.5" width="1.3" height="6.5" fill="#d0d0d0"/>
<text x="743.4" y="973.0" font-size="14.53" fill="#dcdcdc" textLength="29.5" lengthAdjust="spacingAndGlyphs" text-anchor="middle" >0.32</text>
<rect x="794.65" y="949.5" width="1.3" height="6.5" fill="#d0d0d0"/>
<text x="795.3" y="973.0" font-size="14.53" fill="#dcdcdc" textLength="29.5" lengthAdjust="spacingAndGlyphs" text-anchor="middle" >0.33</text>
<circle cx="689" cy="844" r="5" fill="#585858" stroke="#222" stroke-width="0.8"/>
<circle cx="692.5" cy="848.5" r="5" fill="#7a7a7a" stroke="#222" stroke-width="0.8"/>
<circle cx="691.5" cy="856" r="5" fill="#4a4a4a" stroke="#222" stroke-width="0.8"/>
<circle cx="689.5" cy="851" r="5" fill="#b0b0b0" stroke="#222" stroke-width="0.8"/>
<circle cx="682.5" cy="861" r="4.6" fill="#1a1a1a" stroke="#000" stroke-width="0.8"/>
<circle cx="685.5" cy="851.5" r="4.6" fill="#fff" stroke="#333" stroke-width="0.8"/>
<rect x="699" y="849.5" width="13" height="14" fill="#fff" stroke="#000" stroke-width="2"/>
<rect x="847.2" y="735" width="882.5" height="13.5" fill="#2c2c2c"/>
<rect x="847.2" y="748.5" width="882.5" height="13.5" fill="#161616"/>
<rect x="847.2" y="735" width="10.8" height="27" fill="#000"/>
<text x="968.7" y="754.0" font-size="13.52" fill="#f0f0f0" textLength="6.7" lengthAdjust="spacingAndGlyphs" >0</text>
<text x="1044.8" y="754.0" font-size="13.52" fill="#f0f0f0" textLength="13.4" lengthAdjust="spacingAndGlyphs" >10</text>
<text x="1113.7" y="754.0" font-size="13.52" fill="#f0f0f0" textLength="13.4" lengthAdjust="spacingAndGlyphs" >20</text>
<text x="1182.6" y="754.0" font-size="13.52" fill="#f0f0f0" textLength="13.4" lengthAdjust="spacingAndGlyphs" >30</text>
<text x="1251.5" y="754.0" font-size="13.52" fill="#f0f0f0" textLength="13.4" lengthAdjust="spacingAndGlyphs" >40</text>
<text x="1320.4" y="754.0" font-size="13.52" fill="#f0f0f0" textLength="13.4" lengthAdjust="spacingAndGlyphs" >50</text>
<text x="1389.3" y="754.0" font-size="13.52" fill="#f0f0f0" textLength="13.4" lengthAdjust="spacingAndGlyphs" >60</text>
<text x="1458.2" y="754.0" font-size="13.52" fill="#f0f0f0" textLength="13.4" lengthAdjust="spacingAndGlyphs" >70</text>
<text x="1527.1" y="754.0" font-size="13.52" fill="#f0f0f0" textLength="13.4" lengthAdjust="spacingAndGlyphs" >80</text>
<text x="1596.0" y="754.0" font-size="13.52" fill="#f0f0f0" textLength="13.4" lengthAdjust="spacingAndGlyphs" >90</text>
<text x="1664.9" y="754.0" font-size="13.52" fill="#f0f0f0" textLength="20.1" lengthAdjust="spacingAndGlyphs" >100</text>
<rect x="847.2" y="762.0" width="882.5" height="25.7" fill="#3c3c3c"/>
<rect x="847.2" y="762.0" width="10.8" height="25.7" fill="#262626"/>
<text x="861.6" y="780.8" font-size="14.53" fill="#f0f0f0" textLength="45.6" lengthAdjust="spacingAndGlyphs" >x: CIE31</text>
<text x="969.7" y="780.8" font-size="14.53" fill="#f0f0f0" textLength="39.6" lengthAdjust="spacingAndGlyphs" >0.2668</text>
<text x="1044.8" y="780.8" font-size="14.53" fill="#f0f0f0" textLength="39.6" lengthAdjust="spacingAndGlyphs" >0.3085</text>
<text x="1113.7" y="780.8" font-size="14.53" fill="#f0f0f0" textLength="39.6" lengthAdjust="spacingAndGlyphs" >0.3101</text>
<text x="1182.6" y="780.8" font-size="14.53" fill="#f0f0f0" textLength="39.6" lengthAdjust="spacingAndGlyphs" >0.3097</text>
<text x="1251.5" y="780.8" font-size="14.53" fill="#f0f0f0" textLength="39.6" lengthAdjust="spacingAndGlyphs" >0.3098</text>
<text x="1320.4" y="780.8" font-size="14.53" fill="#f0f0f0" textLength="39.6" lengthAdjust="spacingAndGlyphs" >0.3106</text>
<text x="1389.3" y="780.8" font-size="14.53" fill="#f0f0f0" textLength="39.6" lengthAdjust="spacingAndGlyphs" >0.3096</text>
<text x="1458.2" y="780.8" font-size="14.53" fill="#f0f0f0" textLength="39.6" lengthAdjust="spacingAndGlyphs" >0.3094</text>
<text x="1527.1" y="780.8" font-size="14.53" fill="#f0f0f0" textLength="39.6" lengthAdjust="spacingAndGlyphs" >0.3096</text>
<text x="1596.0" y="780.8" font-size="14.53" fill="#f0f0f0" textLength="39.6" lengthAdjust="spacingAndGlyphs" >0.3092</text>
<text x="1664.9" y="780.8" font-size="14.53" fill="#f0f0f0" textLength="39.6" lengthAdjust="spacingAndGlyphs" >0.3090</text>
<rect x="847.2" y="787.6" width="882.5" height="25.7" fill="#7c7c7c"/>
<rect x="847.2" y="787.6" width="10.8" height="25.7" fill="#262626"/>
<text x="861.6" y="806.4" font-size="14.53" fill="#f0f0f0" textLength="45.6" lengthAdjust="spacingAndGlyphs" >y: CIE31</text>
<text x="969.7" y="806.4" font-size="14.53" fill="#f0f0f0" textLength="39.6" lengthAdjust="spacingAndGlyphs" >0.2551</text>
<text x="1044.8" y="806.4" font-size="14.53" fill="#f0f0f0" textLength="39.6" lengthAdjust="spacingAndGlyphs" >0.3278</text>
<text x="1113.7" y="806.4" font-size="14.53" fill="#f0f0f0" textLength="39.6" lengthAdjust="spacingAndGlyphs" >0.3292</text>
<text x="1182.6" y="806.4" font-size="14.53" fill="#f0f0f0" textLength="39.6" lengthAdjust="spacingAndGlyphs" >0.3320</text>
<text x="1251.5" y="806.4" font-size="14.53" fill="#f0f0f0" textLength="39.6" lengthAdjust="spacingAndGlyphs" >0.3308</text>
<text x="1320.4" y="806.4" font-size="14.53" fill="#f0f0f0" textLength="39.6" lengthAdjust="spacingAndGlyphs" >0.3313</text>
<text x="1389.3" y="806.4" font-size="14.53" fill="#f0f0f0" textLength="39.6" lengthAdjust="spacingAndGlyphs" >0.3304</text>
<text x="1458.2" y="806.4" font-size="14.53" fill="#f0f0f0" textLength="39.6" lengthAdjust="spacingAndGlyphs" >0.3298</text>
<text x="1527.1" y="806.4" font-size="14.53" fill="#f0f0f0" textLength="39.6" lengthAdjust="spacingAndGlyphs" >0.3313</text>
<text x="1596.0" y="806.4" font-size="14.53" fill="#f0f0f0" textLength="39.6" lengthAdjust="spacingAndGlyphs" >0.3296</text>
<text x="1664.9" y="806.4" font-size="14.53" fill="#f0f0f0" textLength="39.6" lengthAdjust="spacingAndGlyphs" >0.3305</text>
<rect x="847.2" y="813.2" width="882.5" height="25.7" fill="#3c3c3c"/>
<rect x="847.2" y="813.2" width="10.8" height="25.7" fill="#262626"/>
<text x="861.6" y="832.0" font-size="14.53" fill="#f0f0f0" textLength="7.6" lengthAdjust="spacingAndGlyphs" >Y</text>
<text x="969.7" y="832.0" font-size="14.53" fill="#f0f0f0" textLength="39.6" lengthAdjust="spacingAndGlyphs" >0.2586</text>
<text x="1044.8" y="832.0" font-size="14.53" fill="#f0f0f0" textLength="39.6" lengthAdjust="spacingAndGlyphs" >4.3479</text>
<text x="1113.7" y="832.0" font-size="14.53" fill="#f0f0f0" textLength="46.9" lengthAdjust="spacingAndGlyphs" >13.2561</text>
<text x="1182.6" y="832.0" font-size="14.53" fill="#f0f0f0" textLength="46.9" lengthAdjust="spacingAndGlyphs" >29.8021</text>
<text x="1251.5" y="832.0" font-size="14.53" fill="#f0f0f0" textLength="46.9" lengthAdjust="spacingAndGlyphs" >53.7996</text>
<text x="1320.4" y="832.0" font-size="14.53" fill="#f0f0f0" textLength="46.9" lengthAdjust="spacingAndGlyphs" >83.8078</text>
<text x="1389.3" y="832.0" font-size="14.53" fill="#f0f0f0" textLength="54.2" lengthAdjust="spacingAndGlyphs" >126.7038</text>
<text x="1458.2" y="832.0" font-size="14.53" fill="#f0f0f0" textLength="54.2" lengthAdjust="spacingAndGlyphs" >175.2284</text>
<text x="1527.1" y="832.0" font-size="14.53" fill="#f0f0f0" textLength="54.2" lengthAdjust="spacingAndGlyphs" >238.1056</text>
<text x="1596.0" y="832.0" font-size="14.53" fill="#f0f0f0" textLength="54.2" lengthAdjust="spacingAndGlyphs" >310.0050</text>
<text x="1664.9" y="832.0" font-size="14.53" fill="#f0f0f0" textLength="54.2" lengthAdjust="spacingAndGlyphs" >394.6308</text>
<rect x="847.2" y="838.8" width="882.5" height="25.7" fill="#7c7c7c"/>
<rect x="847.2" y="838.8" width="10.8" height="25.7" fill="#262626"/>
<text x="861.6" y="857.6" font-size="14.53" fill="#f0f0f0" textLength="47.3" lengthAdjust="spacingAndGlyphs" >Target Y</text>
<text x="969.7" y="857.6" font-size="14.53" fill="#f0f0f0" textLength="39.6" lengthAdjust="spacingAndGlyphs" >0.0000</text>
<text x="1044.8" y="857.6" font-size="14.53" fill="#f0f0f0" textLength="39.6" lengthAdjust="spacingAndGlyphs" >4.0765</text>
<text x="1113.7" y="857.6" font-size="14.53" fill="#f0f0f0" textLength="46.9" lengthAdjust="spacingAndGlyphs" >13.0642</text>
<text x="1182.6" y="857.6" font-size="14.53" fill="#f0f0f0" textLength="46.9" lengthAdjust="spacingAndGlyphs" >28.5207</text>
<text x="1251.5" y="857.6" font-size="14.53" fill="#f0f0f0" textLength="46.9" lengthAdjust="spacingAndGlyphs" >52.4339</text>
<text x="1320.4" y="857.6" font-size="14.53" fill="#f0f0f0" textLength="46.9" lengthAdjust="spacingAndGlyphs" >85.1852</text>
<text x="1389.3" y="857.6" font-size="14.53" fill="#f0f0f0" textLength="54.2" lengthAdjust="spacingAndGlyphs" >125.7084</text>
<text x="1458.2" y="857.6" font-size="14.53" fill="#f0f0f0" textLength="54.2" lengthAdjust="spacingAndGlyphs" >175.6901</text>
<text x="1527.1" y="857.6" font-size="14.53" fill="#f0f0f0" textLength="54.2" lengthAdjust="spacingAndGlyphs" >238.2889</text>
<text x="1596.0" y="857.6" font-size="14.53" fill="#f0f0f0" textLength="54.2" lengthAdjust="spacingAndGlyphs" >312.2705</text>
<text x="1664.9" y="857.6" font-size="14.53" fill="#f0f0f0" textLength="54.2" lengthAdjust="spacingAndGlyphs" >394.6308</text>
<rect x="847.2" y="864.4" width="882.5" height="25.7" fill="#3c3c3c"/>
<rect x="847.2" y="864.4" width="10.8" height="25.7" fill="#262626"/>
<text x="861.6" y="883.2" font-size="14.53" fill="#f0f0f0" textLength="99.0" lengthAdjust="spacingAndGlyphs" >Gamma Log/Log</text>
<text x="969.7" y="883.2" font-size="14.53" fill="#f0f0f0" textLength="39.6" lengthAdjust="spacingAndGlyphs" >1.2778</text>
<text x="1044.8" y="883.2" font-size="14.53" fill="#f0f0f0" textLength="39.6" lengthAdjust="spacingAndGlyphs" >1.9746</text>
<rect x="1110.7" y="865.4" width="67.1" height="23.2" fill="#f0f0f0" stroke="#bdbdbd" stroke-width="0.8"/>
<text x="1114.2" y="883.2" font-size="14.53" fill="#000" textLength="39.6" lengthAdjust="spacingAndGlyphs" >2.1085</text>
<text x="1182.6" y="883.2" font-size="14.53" fill="#f0f0f0" textLength="39.6" lengthAdjust="spacingAndGlyphs" >2.1341</text>
<text x="1251.5" y="883.2" font-size="14.53" fill="#f0f0f0" textLength="39.6" lengthAdjust="spacingAndGlyphs" >2.1747</text>
<text x="1320.4" y="883.2" font-size="14.53" fill="#f0f0f0" textLength="39.6" lengthAdjust="spacingAndGlyphs" >2.2480</text>
<text x="1389.3" y="883.2" font-size="14.53" fill="#f0f0f0" textLength="39.6" lengthAdjust="spacingAndGlyphs" >2.2240</text>
<text x="1458.2" y="883.2" font-size="14.53" fill="#f0f0f0" textLength="39.6" lengthAdjust="spacingAndGlyphs" >2.2584</text>
<text x="1527.1" y="883.2" font-size="14.53" fill="#f0f0f0" textLength="39.6" lengthAdjust="spacingAndGlyphs" >2.2642</text>
<text x="1596.0" y="883.2" font-size="14.53" fill="#f0f0f0" textLength="39.6" lengthAdjust="spacingAndGlyphs" >2.3391</text>
<text x="1664.9" y="883.2" font-size="14.53" fill="#f0f0f0" textLength="39.6" lengthAdjust="spacingAndGlyphs" >2.2749</text>
<rect x="847.2" y="890.0" width="882.5" height="25.7" fill="#7c7c7c"/>
<rect x="847.2" y="890.0" width="10.8" height="25.7" fill="#262626"/>
<text x="861.6" y="908.8" font-size="14.53" fill="#f0f0f0" textLength="23.3" lengthAdjust="spacingAndGlyphs" >CCT</text>
<text x="969.7" y="908.8" font-size="14.53" fill="#f0f0f0" textLength="68.7" lengthAdjust="spacingAndGlyphs" >15494.0000</text>
<text x="1044.8" y="908.8" font-size="14.53" fill="#f0f0f0" textLength="61.4" lengthAdjust="spacingAndGlyphs" >6747.0000</text>
<text x="1113.7" y="908.8" font-size="14.53" fill="#f0f0f0" textLength="61.4" lengthAdjust="spacingAndGlyphs" >6644.0000</text>
<text x="1182.6" y="908.8" font-size="14.53" fill="#f0f0f0" textLength="61.4" lengthAdjust="spacingAndGlyphs" >6643.0000</text>
<text x="1251.5" y="908.8" font-size="14.53" fill="#f0f0f0" textLength="61.4" lengthAdjust="spacingAndGlyphs" >6648.0000</text>
<text x="1320.4" y="908.8" font-size="14.53" fill="#f0f0f0" textLength="61.4" lengthAdjust="spacingAndGlyphs" >6603.0000</text>
<text x="1389.3" y="908.8" font-size="14.53" fill="#f0f0f0" textLength="61.4" lengthAdjust="spacingAndGlyphs" >6661.0000</text>
<text x="1458.2" y="908.8" font-size="14.53" fill="#f0f0f0" textLength="61.4" lengthAdjust="spacingAndGlyphs" >6678.0000</text>
<text x="1527.1" y="908.8" font-size="14.53" fill="#f0f0f0" textLength="61.4" lengthAdjust="spacingAndGlyphs" >6654.0000</text>
<text x="1596.0" y="908.8" font-size="14.53" fill="#f0f0f0" textLength="61.4" lengthAdjust="spacingAndGlyphs" >6694.0000</text>
<text x="1664.9" y="908.8" font-size="14.53" fill="#f0f0f0" textLength="61.4" lengthAdjust="spacingAndGlyphs" >6698.0000</text>
<rect x="847.2" y="915.6" width="882.5" height="25.7" fill="#3c3c3c"/>
<rect x="847.2" y="915.6" width="10.8" height="25.7" fill="#262626"/>
<text x="861.6" y="934.4" font-size="14.53" fill="#f0f0f0" textLength="47.8" lengthAdjust="spacingAndGlyphs" >ΔE 2000</text>
<text x="969.7" y="934.4" font-size="14.53" fill="#f0f0f0" textLength="39.6" lengthAdjust="spacingAndGlyphs" >0.8830</text>
<text x="1044.8" y="934.4" font-size="14.53" fill="#f0f0f0" textLength="39.6" lengthAdjust="spacingAndGlyphs" >0.6941</text>
<text x="1113.7" y="934.4" font-size="14.53" fill="#f0f0f0" textLength="39.6" lengthAdjust="spacingAndGlyphs" >0.7329</text>
<text x="1182.6" y="934.4" font-size="14.53" fill="#f0f0f0" textLength="39.6" lengthAdjust="spacingAndGlyphs" >1.9857</text>
<text x="1251.5" y="934.4" font-size="14.53" fill="#f0f0f0" textLength="39.6" lengthAdjust="spacingAndGlyphs" >1.8614</text>
<text x="1320.4" y="934.4" font-size="14.53" fill="#f0f0f0" textLength="39.6" lengthAdjust="spacingAndGlyphs" >2.0264</text>
<text x="1389.3" y="934.4" font-size="14.53" fill="#f0f0f0" textLength="39.6" lengthAdjust="spacingAndGlyphs" >2.2678</text>
<text x="1458.2" y="934.4" font-size="14.53" fill="#f0f0f0" textLength="39.6" lengthAdjust="spacingAndGlyphs" >2.3300</text>
<text x="1527.1" y="934.4" font-size="14.53" fill="#f0f0f0" textLength="39.6" lengthAdjust="spacingAndGlyphs" >3.3040</text>
<text x="1596.0" y="934.4" font-size="14.53" fill="#f0f0f0" textLength="39.6" lengthAdjust="spacingAndGlyphs" >2.8852</text>
<text x="1664.9" y="934.4" font-size="14.53" fill="#f0f0f0" textLength="39.6" lengthAdjust="spacingAndGlyphs" >3.7642</text>
<rect x="847.2" y="941.2" width="882.5" height="25.7" fill="#7c7c7c"/>
<rect x="847.2" y="941.2" width="10.8" height="25.7" fill="#262626"/>
<text x="861.6" y="960.0" font-size="14.53" fill="#f0f0f0" textLength="32.7" lengthAdjust="spacingAndGlyphs" >dEITP</text>
<text x="969.7" y="960.0" font-size="14.53" fill="#f0f0f0" textLength="46.9" lengthAdjust="spacingAndGlyphs" >67.6118</text>
<text x="1044.8" y="960.0" font-size="14.53" fill="#f0f0f0" textLength="39.6" lengthAdjust="spacingAndGlyphs" >3.6046</text>
<text x="1113.7" y="960.0" font-size="14.53" fill="#f0f0f0" textLength="39.6" lengthAdjust="spacingAndGlyphs" >1.6447</text>
<text x="1182.6" y="960.0" font-size="14.53" fill="#f0f0f0" textLength="39.6" lengthAdjust="spacingAndGlyphs" >3.7752</text>
<text x="1251.5" y="960.0" font-size="14.53" fill="#f0f0f0" textLength="39.6" lengthAdjust="spacingAndGlyphs" >2.8350</text>
<text x="1320.4" y="960.0" font-size="14.53" fill="#f0f0f0" textLength="39.6" lengthAdjust="spacingAndGlyphs" >2.4458</text>
<text x="1389.3" y="960.0" font-size="14.53" fill="#f0f0f0" textLength="39.6" lengthAdjust="spacingAndGlyphs" >2.4589</text>
<text x="1458.2" y="960.0" font-size="14.53" fill="#f0f0f0" textLength="39.6" lengthAdjust="spacingAndGlyphs" >2.4298</text>
<text x="1527.1" y="960.0" font-size="14.53" fill="#f0f0f0" textLength="39.6" lengthAdjust="spacingAndGlyphs" >2.8275</text>
<text x="1596.0" y="960.0" font-size="14.53" fill="#f0f0f0" textLength="39.6" lengthAdjust="spacingAndGlyphs" >2.6952</text>
<text x="1664.9" y="960.0" font-size="14.53" fill="#f0f0f0" textLength="39.6" lengthAdjust="spacingAndGlyphs" >3.0353</text>
<rect x="201.0" y="988" width="125" height="62" rx="4" fill="url(#btn)"/>
<rect x="206.0" y="993" width="115" height="36" rx="3" fill="#000000" stroke="#5a5a5a" stroke-width="0.8"/>
<text x="263.5" y="1043.5" font-size="11.48" fill="#262626" textLength="5.9" lengthAdjust="spacingAndGlyphs" text-anchor="middle" stroke="#262626" stroke-width="0.35">0</text>
<rect x="327.9" y="988" width="125" height="62" rx="4" fill="url(#btn)"/>
<rect x="332.9" y="993" width="115" height="36" rx="3" fill="#1a1a1a" stroke="#5a5a5a" stroke-width="0.8"/>
<text x="390.4" y="1043.5" font-size="11.48" fill="#262626" textLength="11.8" lengthAdjust="spacingAndGlyphs" text-anchor="middle" stroke="#262626" stroke-width="0.35">10</text>
<rect x="454.7" y="988" width="125" height="62" rx="4" fill="url(#btn)"/>
<rect x="459.7" y="993" width="115" height="36" rx="3" fill="#333333" stroke="#5a5a5a" stroke-width="0.8"/>
<text x="517.2" y="1043.5" font-size="11.48" fill="#262626" textLength="11.8" lengthAdjust="spacingAndGlyphs" text-anchor="middle" stroke="#262626" stroke-width="0.35">20</text>
<rect x="581.5" y="988" width="125" height="62" rx="4" fill="url(#btn)"/>
<rect x="586.5" y="993" width="115" height="36" rx="3" fill="#4d4d4d" stroke="#5a5a5a" stroke-width="0.8"/>
<text x="644.0" y="1043.5" font-size="11.48" fill="#262626" textLength="11.8" lengthAdjust="spacingAndGlyphs" text-anchor="middle" stroke="#262626" stroke-width="0.35">30</text>
<rect x="708.4" y="988" width="125" height="62" rx="4" fill="url(#btn)"/>
<rect x="713.4" y="993" width="115" height="36" rx="3" fill="#666666" stroke="#5a5a5a" stroke-width="0.8"/>
<text x="770.9" y="1043.5" font-size="11.48" fill="#262626" textLength="11.8" lengthAdjust="spacingAndGlyphs" text-anchor="middle" stroke="#262626" stroke-width="0.35">40</text>
<rect x="835.2" y="988" width="125" height="62" rx="4" fill="url(#btn)"/>
<rect x="840.2" y="993" width="115" height="36" rx="3" fill="#808080" stroke="#5a5a5a" stroke-width="0.8"/>
<text x="897.8" y="1043.5" font-size="11.48" fill="#262626" textLength="11.8" lengthAdjust="spacingAndGlyphs" text-anchor="middle" stroke="#262626" stroke-width="0.35">50</text>
<rect x="962.1" y="988" width="125" height="62" rx="4" fill="url(#btn)"/>
<rect x="967.1" y="993" width="115" height="36" rx="3" fill="#999999" stroke="#5a5a5a" stroke-width="0.8"/>
<text x="1024.6" y="1043.5" font-size="11.48" fill="#262626" textLength="11.8" lengthAdjust="spacingAndGlyphs" text-anchor="middle" stroke="#262626" stroke-width="0.35">60</text>
<rect x="1088.9" y="988" width="125" height="62" rx="4" fill="url(#btn)"/>
<rect x="1093.9" y="993" width="115" height="36" rx="3" fill="#b3b3b3" stroke="#5a5a5a" stroke-width="0.8"/>
<text x="1151.4" y="1043.5" font-size="11.48" fill="#262626" textLength="11.8" lengthAdjust="spacingAndGlyphs" text-anchor="middle" stroke="#262626" stroke-width="0.35">70</text>
<rect x="1215.8" y="988" width="125" height="62" rx="4" fill="url(#btn)"/>
<rect x="1220.8" y="993" width="115" height="36" rx="3" fill="#cccccc" stroke="#5a5a5a" stroke-width="0.8"/>
<text x="1278.3" y="1043.5" font-size="11.48" fill="#262626" textLength="11.8" lengthAdjust="spacingAndGlyphs" text-anchor="middle" stroke="#262626" stroke-width="0.35">80</text>
<rect x="1342.6" y="988" width="125" height="62" rx="4" fill="url(#btn)"/>
<rect x="1347.6" y="993" width="115" height="36" rx="3" fill="#e6e6e6" stroke="#5a5a5a" stroke-width="0.8"/>
<text x="1405.1" y="1043.5" font-size="11.48" fill="#262626" textLength="11.8" lengthAdjust="spacingAndGlyphs" text-anchor="middle" stroke="#262626" stroke-width="0.35">90</text>
<rect x="1469.5" y="988.5" width="125" height="61" rx="4" fill="#262626"/>
<rect x="1474.8" y="993.3" width="114.5" height="35.4" rx="3" fill="#ffffff"/>
<text x="1531.5" y="1043.4" font-size="11.92" fill="#ffffff" textLength="18.0" lengthAdjust="spacingAndGlyphs" font-weight="bold" text-anchor="middle" >100</text>
<rect x="1596.8" y="988" width="47.8" height="62" rx="4" fill="url(#btn)"/>
<rect x="1606.5" y="1013.5" width="30" height="29.5" rx="4" fill="#8a8a8a" stroke="#222" stroke-width="2"/>
<rect x="1614" y="1021" width="14" height="11" fill="#000"/>
<rect x="1646.4" y="988" width="44.5" height="29" fill="url(#navtop)" stroke="#555" stroke-width="0.6"/>
<circle cx="1668.6" cy="1003.5" r="9.5" fill="url(#circ)" opacity="0.75"/>
<rect x="1665.1" y="998" width="2.2" height="9" fill="#1a1a1a"/><rect x="1669.9" y="998" width="2.2" height="9" fill="#1a1a1a"/>
<rect x="1691.6" y="988" width="44.5" height="29" fill="url(#navtop)" stroke="#555" stroke-width="0.6"/>
<circle cx="1713.8" cy="1003.5" r="9.5" fill="url(#circ)" opacity="0.75"/>
<path d="M1710.8 998 L1717.8 1003 L1710.8 1008 Z" fill="#1a1a1a"/>
<rect x="1736.8" y="988" width="44.5" height="29" fill="url(#navtop)" stroke="#555" stroke-width="0.6"/>
<circle cx="1759.0" cy="1003.5" r="9.5" fill="url(#circ)" opacity="0.75"/>
<rect x="1755.0" y="998.5" width="8" height="8" fill="none" stroke="#1a1a1a" stroke-width="1.6"/>
<rect x="1782.0" y="988" width="44.5" height="29" fill="url(#navtop)" stroke="#555" stroke-width="0.6"/>
<circle cx="1804.2" cy="1003.5" r="9.5" fill="url(#circ)" opacity="0.75"/>
<path d="M1799.2 1003 q2.5 -4 5 0 t5 0" fill="none" stroke="#1a1a1a" stroke-width="1.8"/>
<rect x="1827.2" y="988" width="44.5" height="29" fill="url(#navtop)" stroke="#555" stroke-width="0.6"/>
<circle cx="1849.4" cy="1003.5" r="9.5" fill="url(#circ)" opacity="0.75"/>
<path d="M1853.4 1003 a4 4 0 1 1 -2 -3.5" fill="none" stroke="#1a1a1a" stroke-width="1.8"/>
<rect x="1872.5" y="988" width="47.5" height="29" fill="#383838"/>
<circle cx="1896" cy="1004" r="9" fill="#2e2e2e"/>
<rect x="1646.4" y="1019" width="136" height="29.5" rx="3" fill="url(#nav)" stroke="#555" stroke-width="0.6"/>
<rect x="1782.4" y="1019" width="136.2" height="29.5" rx="3" fill="url(#nav)" stroke="#555" stroke-width="0.6"/>
<circle cx="1677" cy="1033.5" r="10" fill="url(#circ3)"/>
<circle cx="1890" cy="1033.5" r="10" fill="url(#circ3)"/>
<path d="M1676 1029 L1672 1033.5 L1676 1038 M1681 1029 L1677 1033.5 L1681 1038" fill="none" stroke="#2a2a2a" stroke-width="1.8"/>
<path d="M1886 1029 L1890 1033.5 L1886 1038 M1891 1029 L1895 1033.5 L1891 1038" fill="none" stroke="#2a2a2a" stroke-width="1.8"/>
<text x="1704.0" y="1042.0" font-size="22.67" fill="#262626" textLength="50.4" lengthAdjust="spacingAndGlyphs" stroke="#262626" stroke-width="0.6">Back</text>
<text x="1810.2" y="1042.0" font-size="22.67" fill="#262626" textLength="51.8" lengthAdjust="spacingAndGlyphs" stroke="#262626" stroke-width="0.6">Next</text>
<g opacity="0.82">
<path d="M1537 970.5 L1585.5 981 L1586.5 1007.5 L1619.5 1014.8 L1568 1031.5 L1540 1015.5 Z" fill="none" stroke="#bdbdbd" stroke-width="7.6" stroke-linejoin="round"/>
<path d="M1537 970.5 L1585.5 981 L1586.5 1007.5 L1619.5 1014.8 L1568 1031.5 L1540 1015.5 Z" fill="none" stroke="#8a2a32" stroke-width="4.8" stroke-linejoin="round"/>
</g>
<path d="M1546.6 1011.6 L1586.8 1007.3" stroke="#b04048" stroke-opacity="0.8" stroke-width="1.6"/>
<g opacity="0.88">
<path d="M1548.7 985.4 Q1553 980 1557 982 Q1560 986 1563.7 996 L1590.5 966 L1594 968.5 L1564.5 1005 Q1559 993 1555 989 Q1551.5 986 1548.7 985.4 Z" fill="#bdbdbd" stroke="#bdbdbd" stroke-width="3" stroke-linejoin="round"/>
<path d="M1548.7 985.4 Q1553 980 1557 982 Q1560 986 1563.7 996 L1590.5 966 L1594 968.5 L1564.5 1005 Q1559 993 1555 989 Q1551.5 986 1548.7 985.4 Z" fill="#2c2c2c" stroke="#2c2c2c" stroke-width="0.6" stroke-linejoin="round"/>
</g>
<mask id="wmmask" maskUnits="userSpaceOnUse" x="1580" y="960" width="340" height="60"><rect x="1580" y="960" width="340" height="60" fill="#fff"/><text x="1592.6" y="1006.3" font-size="35.5" font-weight="bold" textLength="199.4" lengthAdjust="spacingAndGlyphs" stroke-linejoin="round" fill="#000" stroke="#000" stroke-width="1.8">NOTEBOOK</text><text x="1793" y="1006.3" font-size="35.5" font-weight="bold" textLength="116.7" lengthAdjust="spacingAndGlyphs" stroke-linejoin="round" fill="#000" stroke="#000" stroke-width="1.8">CHECK</text></mask>
<g opacity="0.8" mask="url(#wmmask)">
<text x="1592.6" y="1006.3" font-size="35.5" font-weight="bold" textLength="199.4" lengthAdjust="spacingAndGlyphs" stroke-linejoin="round" fill="#c8c8c8" stroke="#c8c8c8" stroke-width="5.0">NOTEBOOK</text>
<text x="1793" y="1006.3" font-size="35.5" font-weight="bold" textLength="116.7" lengthAdjust="spacingAndGlyphs" stroke-linejoin="round" fill="#c8c8c8" stroke="#c8c8c8" stroke-width="5.0">CHECK</text>
</g>
<g opacity="0.66">
<text x="1592.6" y="1006.3" font-size="35.5" font-weight="bold" textLength="199.4" lengthAdjust="spacingAndGlyphs" stroke-linejoin="round" fill="#9a2a36" stroke="#9a2a36" stroke-width="1.8">NOTEBOOK</text>
</g>
<g opacity="0.32">
<text x="1793" y="1006.3" font-size="35.5" font-weight="bold" textLength="116.7" lengthAdjust="spacingAndGlyphs" stroke-linejoin="round" fill="#1a1a1a" stroke="#1a1a1a" stroke-width="1.8">CHECK</text>
</g>
</g></svg>
</body></html>
